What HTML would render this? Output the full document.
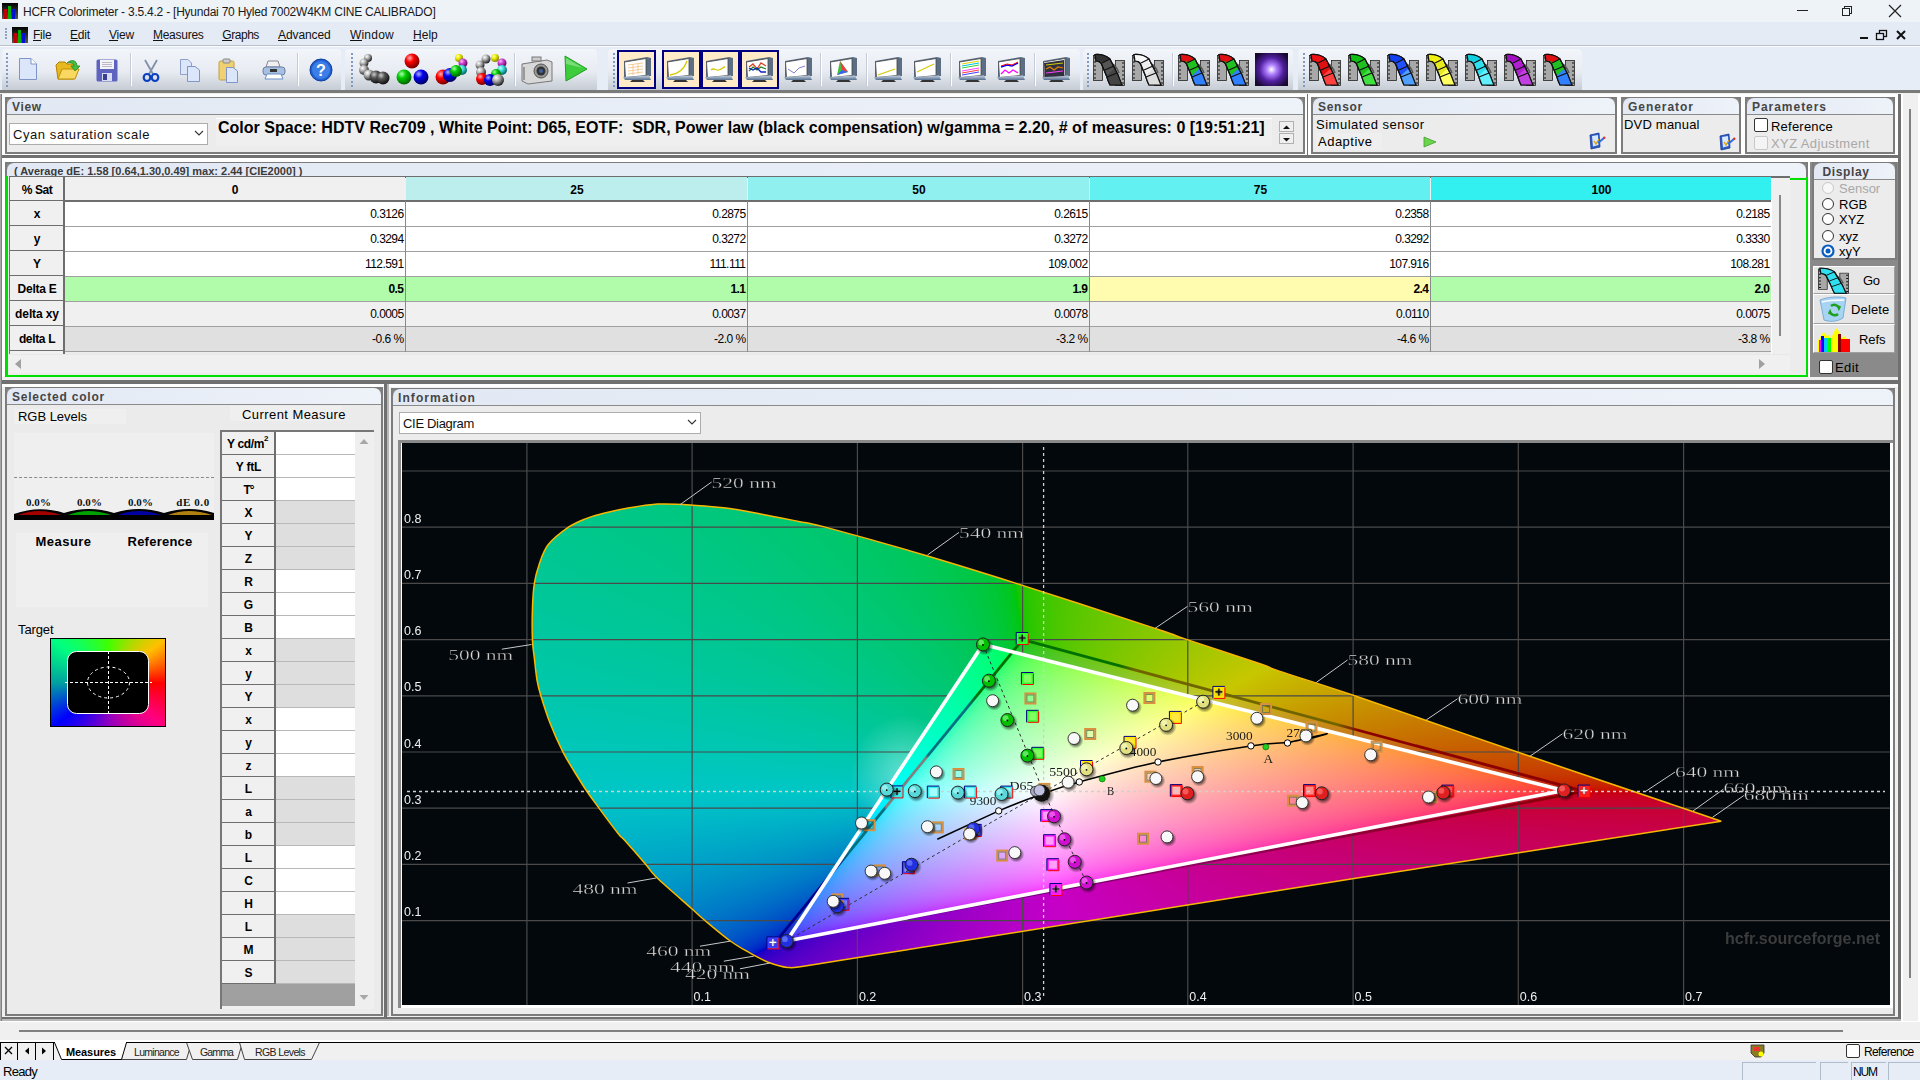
<!DOCTYPE html><html><head><meta charset="utf-8"><title>HCFR</title><style>*{margin:0;padding:0;box-sizing:border-box}
html,body{width:1920px;height:1080px;overflow:hidden;background:#f0f0f0;font-family:"Liberation Sans",sans-serif;font-size:12px;color:#000;position:relative}
div{position:absolute}
.t{white-space:pre;line-height:1}
svg{overflow:visible}
</style></head><body>
<svg width="0" height="0" style="position:absolute"><defs><radialGradient id="ballG" cx="0.35" cy="0.3" r="0.7"><stop offset="0" stop-color="#fff"/><stop offset="0.45" stop-color="#aaa"/><stop offset="1" stop-color="#222"/></radialGradient><radialGradient id="ballD" cx="0.35" cy="0.3" r="0.7"><stop offset="0" stop-color="#ccc"/><stop offset="0.4" stop-color="#555"/><stop offset="1" stop-color="#111"/></radialGradient><radialGradient id="ballR" cx="0.35" cy="0.3" r="0.7"><stop offset="0" stop-color="#ffb0b0"/><stop offset="0.4" stop-color="#f00"/><stop offset="1" stop-color="#700"/></radialGradient><radialGradient id="ballGr" cx="0.35" cy="0.3" r="0.7"><stop offset="0" stop-color="#b0ffb0"/><stop offset="0.4" stop-color="#0c0"/><stop offset="1" stop-color="#060"/></radialGradient><radialGradient id="ballB" cx="0.35" cy="0.3" r="0.7"><stop offset="0" stop-color="#b0b0ff"/><stop offset="0.4" stop-color="#00e"/><stop offset="1" stop-color="#006"/></radialGradient><radialGradient id="ballY" cx="0.35" cy="0.3" r="0.7"><stop offset="0" stop-color="#ffffc0"/><stop offset="0.4" stop-color="#ee0"/><stop offset="1" stop-color="#880"/></radialGradient><radialGradient id="ballM" cx="0.35" cy="0.3" r="0.7"><stop offset="0" stop-color="#ffc0ff"/><stop offset="0.4" stop-color="#c4c"/><stop offset="1" stop-color="#606"/></radialGradient><radialGradient id="ballC" cx="0.35" cy="0.3" r="0.7"><stop offset="0" stop-color="#c0ffff"/><stop offset="0.4" stop-color="#4dd"/><stop offset="1" stop-color="#066"/></radialGradient><linearGradient id="monB" x1="0" y1="0" x2="0" y2="1"><stop offset="0" stop-color="#c8d4e4"/><stop offset="1" stop-color="#56708e"/></linearGradient><linearGradient id="tbg" x1="0" y1="0" x2="0" y2="1"><stop offset="0" stop-color="#f1f4f9"/><stop offset="0.55" stop-color="#e6eaf0"/><stop offset="1" stop-color="#c9cfd7"/></linearGradient><radialGradient id="purp" cx="0.5" cy="0.5" r="0.6"><stop offset="0" stop-color="#fff"/><stop offset="0.25" stop-color="#b080ff"/><stop offset="0.6" stop-color="#5020a0"/><stop offset="1" stop-color="#180830"/></radialGradient></defs></svg>
<div style="left:0px;top:0px;width:1920px;height:22px;background:#eef3f8;"></div>
<svg style="position:absolute;left:2px;top:3px" width="16" height="16" viewBox="0 0 16 16"><defs><linearGradient id="aig" x1="0" y1="0" x2="0" y2="1"><stop offset="0" stop-color="#000"/><stop offset="1" stop-color="#555"/></linearGradient></defs><rect x="0" y="0" width="16" height="16" fill="url(#aig)"/><rect x="2" y="6" width="3" height="10" fill="#c00000"/><rect x="6" y="3" width="3" height="13" fill="#00b000"/><rect x="10" y="6" width="3" height="10" fill="#0010d0"/></svg>
<div class="t" style="left:23.00px;top:5.84px;font-size:12px;color:#1a1a1a;letter-spacing:-0.230px;">HCFR Colorimeter - 3.5.4.2 - [Hyundai 70 Hyled 7002W4KM CINE CALIBRADO]</div>
<div style="left:1797px;top:10px;width:11px;height:1px;background:#222;"></div>
<div style="left:1844px;top:6px;width:8px;height:8px;border:1px solid #222;"></div>
<div style="left:1842px;top:8px;width:8px;height:8px;background:#eef3f8;border:1px solid #222;"></div>
<svg style="position:absolute;left:1888px;top:4px" width="14" height="14"><path d="M1 1L13 13M13 1L1 13" stroke="#222" stroke-width="1.2"/></svg>
<div style="left:0px;top:22px;width:1920px;height:24px;background:#e4ebf5;"></div>
<div style="left:0px;top:45px;width:1920px;height:1px;background:#b9c0c8;"></div>
<div style="left:5px;top:28px;width:2px;height:2px;background:#8ea3c0;"></div>
<div style="left:5px;top:31px;width:2px;height:2px;background:#8ea3c0;"></div>
<div style="left:5px;top:34px;width:2px;height:2px;background:#8ea3c0;"></div>
<div style="left:5px;top:37px;width:2px;height:2px;background:#8ea3c0;"></div>
<svg style="position:absolute;left:12px;top:27px" width="16" height="16" viewBox="0 0 16 16"><defs><linearGradient id="aig" x1="0" y1="0" x2="0" y2="1"><stop offset="0" stop-color="#000"/><stop offset="1" stop-color="#555"/></linearGradient></defs><rect x="0" y="0" width="16" height="16" fill="url(#aig)"/><rect x="2" y="6" width="3" height="10" fill="#c00000"/><rect x="6" y="3" width="3" height="13" fill="#00b000"/><rect x="10" y="6" width="3" height="10" fill="#0010d0"/></svg>
<div class="t" style="left:33.00px;top:28.84px;font-size:12px;color:#111;letter-spacing:-0.209px;">File</div>
<div style="left:33px;top:40px;width:8px;height:1px;background:#111;"></div>
<div class="t" style="left:70.00px;top:28.84px;font-size:12px;color:#111;letter-spacing:-0.170px;">Edit</div>
<div style="left:70px;top:40px;width:9px;height:1px;background:#111;"></div>
<div class="t" style="left:109.00px;top:28.84px;font-size:12px;color:#111;letter-spacing:-0.198px;">View</div>
<div style="left:109px;top:40px;width:9px;height:1px;background:#111;"></div>
<div class="t" style="left:153.00px;top:28.84px;font-size:12px;color:#111;letter-spacing:-0.273px;">Measures</div>
<div style="left:153px;top:40px;width:10px;height:1px;background:#111;"></div>
<div class="t" style="left:222.30px;top:28.84px;font-size:12px;color:#111;letter-spacing:-0.459px;">Graphs</div>
<div style="left:222.3px;top:40px;width:10px;height:1px;background:#111;"></div>
<div class="t" style="left:278.00px;top:28.84px;font-size:12px;color:#111;letter-spacing:-0.084px;">Advanced</div>
<div style="left:278px;top:40px;width:9px;height:1px;background:#111;"></div>
<div class="t" style="left:349.90px;top:28.84px;font-size:12px;color:#111;letter-spacing:0.237px;">Window</div>
<div style="left:349.9px;top:40px;width:12px;height:1px;background:#111;"></div>
<div class="t" style="left:413.00px;top:28.84px;font-size:12px;color:#111;letter-spacing:0.030px;">Help</div>
<div style="left:413px;top:40px;width:9px;height:1px;background:#111;"></div>
<div style="left:1860px;top:37px;width:8px;height:2px;background:#111;"></div>
<svg style="position:absolute;left:1876px;top:30px" width="12" height="10"><rect x="3.5" y="0.5" width="7" height="6" fill="none" stroke="#111" stroke-width="1.3"/><rect x="0.5" y="3.5" width="7" height="6" fill="#e4ebf5" stroke="#111" stroke-width="1.3"/></svg>
<svg style="position:absolute;left:1896px;top:30px" width="10" height="10"><path d="M1 1L9 9M9 1L1 9" stroke="#111" stroke-width="2"/></svg>
<div style="left:0px;top:46px;width:1920px;height:44px;background:#e6edf6;"></div>
<div style="left:0px;top:46px;width:1920px;height:1px;background:#fafcff;"></div>
<div style="left:2px;top:49px;width:339px;height:41px;background:linear-gradient(180deg,#f2f5fa 0%,#e8ecf2 55%,#c6ccd5 100%);border-radius:4px 4px 0 0;"></div>
<div style="left:345px;top:49px;width:252px;height:41px;background:linear-gradient(180deg,#f2f5fa 0%,#e8ecf2 55%,#c6ccd5 100%);border-radius:4px 4px 0 0;"></div>
<div style="left:608px;top:49px;width:472px;height:41px;background:linear-gradient(180deg,#f2f5fa 0%,#e8ecf2 55%,#c6ccd5 100%);border-radius:4px 4px 0 0;"></div>
<div style="left:1083px;top:49px;width:210px;height:41px;background:linear-gradient(180deg,#f2f5fa 0%,#e8ecf2 55%,#c6ccd5 100%);border-radius:4px 4px 0 0;"></div>
<div style="left:1298px;top:49px;width:284px;height:41px;background:linear-gradient(180deg,#f2f5fa 0%,#e8ecf2 55%,#c6ccd5 100%);border-radius:4px 4px 0 0;"></div>
<div style="left:6px;top:53px;width:2px;height:2px;background:#7f9bc4;"></div>
<div style="left:6px;top:57px;width:2px;height:2px;background:#7f9bc4;"></div>
<div style="left:6px;top:61px;width:2px;height:2px;background:#7f9bc4;"></div>
<div style="left:6px;top:65px;width:2px;height:2px;background:#7f9bc4;"></div>
<div style="left:6px;top:69px;width:2px;height:2px;background:#7f9bc4;"></div>
<div style="left:6px;top:73px;width:2px;height:2px;background:#7f9bc4;"></div>
<div style="left:6px;top:77px;width:2px;height:2px;background:#7f9bc4;"></div>
<div style="left:6px;top:81px;width:2px;height:2px;background:#7f9bc4;"></div>
<div style="left:6px;top:85px;width:2px;height:2px;background:#7f9bc4;"></div>
<div style="left:351px;top:53px;width:2px;height:2px;background:#7f9bc4;"></div>
<div style="left:351px;top:57px;width:2px;height:2px;background:#7f9bc4;"></div>
<div style="left:351px;top:61px;width:2px;height:2px;background:#7f9bc4;"></div>
<div style="left:351px;top:65px;width:2px;height:2px;background:#7f9bc4;"></div>
<div style="left:351px;top:69px;width:2px;height:2px;background:#7f9bc4;"></div>
<div style="left:351px;top:73px;width:2px;height:2px;background:#7f9bc4;"></div>
<div style="left:351px;top:77px;width:2px;height:2px;background:#7f9bc4;"></div>
<div style="left:351px;top:81px;width:2px;height:2px;background:#7f9bc4;"></div>
<div style="left:351px;top:85px;width:2px;height:2px;background:#7f9bc4;"></div>
<div style="left:613px;top:53px;width:2px;height:2px;background:#7f9bc4;"></div>
<div style="left:613px;top:57px;width:2px;height:2px;background:#7f9bc4;"></div>
<div style="left:613px;top:61px;width:2px;height:2px;background:#7f9bc4;"></div>
<div style="left:613px;top:65px;width:2px;height:2px;background:#7f9bc4;"></div>
<div style="left:613px;top:69px;width:2px;height:2px;background:#7f9bc4;"></div>
<div style="left:613px;top:73px;width:2px;height:2px;background:#7f9bc4;"></div>
<div style="left:613px;top:77px;width:2px;height:2px;background:#7f9bc4;"></div>
<div style="left:613px;top:81px;width:2px;height:2px;background:#7f9bc4;"></div>
<div style="left:613px;top:85px;width:2px;height:2px;background:#7f9bc4;"></div>
<div style="left:1087px;top:53px;width:2px;height:2px;background:#7f9bc4;"></div>
<div style="left:1087px;top:57px;width:2px;height:2px;background:#7f9bc4;"></div>
<div style="left:1087px;top:61px;width:2px;height:2px;background:#7f9bc4;"></div>
<div style="left:1087px;top:65px;width:2px;height:2px;background:#7f9bc4;"></div>
<div style="left:1087px;top:69px;width:2px;height:2px;background:#7f9bc4;"></div>
<div style="left:1087px;top:73px;width:2px;height:2px;background:#7f9bc4;"></div>
<div style="left:1087px;top:77px;width:2px;height:2px;background:#7f9bc4;"></div>
<div style="left:1087px;top:81px;width:2px;height:2px;background:#7f9bc4;"></div>
<div style="left:1087px;top:85px;width:2px;height:2px;background:#7f9bc4;"></div>
<div style="left:1303px;top:53px;width:2px;height:2px;background:#7f9bc4;"></div>
<div style="left:1303px;top:57px;width:2px;height:2px;background:#7f9bc4;"></div>
<div style="left:1303px;top:61px;width:2px;height:2px;background:#7f9bc4;"></div>
<div style="left:1303px;top:65px;width:2px;height:2px;background:#7f9bc4;"></div>
<div style="left:1303px;top:69px;width:2px;height:2px;background:#7f9bc4;"></div>
<div style="left:1303px;top:73px;width:2px;height:2px;background:#7f9bc4;"></div>
<div style="left:1303px;top:77px;width:2px;height:2px;background:#7f9bc4;"></div>
<div style="left:1303px;top:81px;width:2px;height:2px;background:#7f9bc4;"></div>
<div style="left:1303px;top:85px;width:2px;height:2px;background:#7f9bc4;"></div>
<div style="left:130px;top:53px;width:1px;height:33px;background:#c5ccd6;"></div>
<div style="left:131px;top:53px;width:1px;height:33px;background:#fff;"></div>
<div style="left:297px;top:53px;width:1px;height:33px;background:#c5ccd6;"></div>
<div style="left:298px;top:53px;width:1px;height:33px;background:#fff;"></div>
<div style="left:514px;top:53px;width:1px;height:33px;background:#c5ccd6;"></div>
<div style="left:515px;top:53px;width:1px;height:33px;background:#fff;"></div>
<div style="left:820px;top:53px;width:1px;height:33px;background:#c5ccd6;"></div>
<div style="left:821px;top:53px;width:1px;height:33px;background:#fff;"></div>
<div style="left:866px;top:53px;width:1px;height:33px;background:#c5ccd6;"></div>
<div style="left:867px;top:53px;width:1px;height:33px;background:#fff;"></div>
<div style="left:950px;top:53px;width:1px;height:33px;background:#c5ccd6;"></div>
<div style="left:951px;top:53px;width:1px;height:33px;background:#fff;"></div>
<div style="left:1034px;top:53px;width:1px;height:33px;background:#c5ccd6;"></div>
<div style="left:1035px;top:53px;width:1px;height:33px;background:#fff;"></div>
<div style="left:1172px;top:53px;width:1px;height:33px;background:#c5ccd6;"></div>
<div style="left:1173px;top:53px;width:1px;height:33px;background:#fff;"></div>
<svg style="position:absolute;left:18px;top:57px" width="20" height="24" viewBox="0 0 20 24"><path d="M1.5 1.5H13L18.5 7V22.5H1.5Z" fill="#dbe6fa" stroke="#7f94c8" stroke-width="1"/><path d="M13 1.5V7H18.5" fill="#fff" stroke="#7f94c8"/></svg>
<svg style="position:absolute;left:55px;top:59px" width="26" height="22" viewBox="0 0 26 22"><path d="M1 6L4 3H10L12 5H19V20H3Z" fill="#e8b820" stroke="#b08000"/><path d="M3 20L7 10H24L20 20Z" fill="#f8d860" stroke="#c09000"/><path d="M12 4C16 0 22 1 22 7L25 7L20 12L16 7L19 7C19 4 15 3 12 4Z" fill="#40c040" stroke="#208020" stroke-width="0.7"/></svg>
<svg style="position:absolute;left:96px;top:59px" width="22" height="23" viewBox="0 0 22 23"><rect x="0.5" y="0.5" width="21" height="22" rx="1.5" fill="#5e63c0"/><rect x="4" y="1" width="14" height="9" fill="#f4f4f8"/><path d="M6 3.5H16M6 5.5H16M6 7.5H16" stroke="#aab" stroke-width="0.8"/><rect x="6" y="14" width="10" height="8" fill="#d8dcf0"/><rect x="7" y="15" width="4" height="6" fill="#3a3f90"/></svg>
<svg style="position:absolute;left:142px;top:59px" width="18" height="23" viewBox="0 0 18 23"><path d="M3 1L11 15M15 1L7 15" stroke="#8090a8" stroke-width="1.8"/><ellipse cx="5" cy="18.5" rx="3.3" ry="3.5" fill="none" stroke="#0a40c0" stroke-width="2.2"/><ellipse cx="13" cy="18.5" rx="3.3" ry="3.5" fill="none" stroke="#0a40c0" stroke-width="2.2"/></svg>
<svg style="position:absolute;left:179px;top:58px" width="22" height="24" viewBox="0 0 22 24"><path d="M1.5 1.5H9L12.5 5V16.5H1.5Z" fill="#dbe6fa" stroke="#8fa0c8"/><path d="M8.5 8.5H16L20.5 12V23.5H8.5Z" fill="#dbe6fa" stroke="#7f94c8"/></svg>
<svg style="position:absolute;left:218px;top:58px" width="21" height="25" viewBox="0 0 21 25"><rect x="1" y="3" width="15" height="19" rx="1.5" fill="#f0d070" stroke="#c0a040"/><rect x="5" y="1" width="7" height="4" rx="1" fill="#ccc" stroke="#888"/><path d="M8.5 9.5H15L19.5 13V24.5H8.5Z" fill="#dbe6fa" stroke="#7f94c8"/></svg>
<svg style="position:absolute;left:262px;top:59px" width="24" height="21" viewBox="0 0 24 21"><path d="M6 2H16L18 8H4Z" fill="#f0f0f0" stroke="#889"/><rect x="1" y="8" width="22" height="8" rx="3" fill="#a8c0e0" stroke="#6880a8"/><rect x="8" y="10" width="7" height="3" fill="#333"/><path d="M5 15H19L21 20H3Z" fill="#fff" stroke="#6890c8"/></svg>
<svg style="position:absolute;left:309px;top:58px" width="24" height="24" viewBox="0 0 24 24"><circle cx="12" cy="12" r="11" fill="#2060d0" stroke="#1040a0"/><circle cx="12" cy="12" r="9" fill="#3c7ee8"/><text x="12" y="17.5" text-anchor="middle" font-family="Liberation Sans" font-weight="bold" font-size="16" fill="#fff">?</text></svg>
<svg style="position:absolute;left:357px;top:53px" width="34" height="33" viewBox="0 0 34 33"><circle cx="11" cy="5" r="4" fill="url(#ballG)"/><circle cx="7" cy="10" r="4.5" fill="url(#ballG)"/><circle cx="7" cy="17" r="5" fill="url(#ballG)"/><circle cx="12" cy="22" r="5.5" fill="url(#ballG)"/><circle cx="19" cy="24" r="6.5" fill="url(#ballD)"/><circle cx="26" cy="25" r="6.5" fill="url(#ballD)"/></svg>
<svg style="position:absolute;left:396px;top:53px" width="34" height="33" viewBox="0 0 34 33"><circle cx="16" cy="8" r="7.5" fill="url(#ballR)"/><circle cx="8" cy="24" r="7.5" fill="url(#ballGr)"/><circle cx="25" cy="24" r="7.5" fill="url(#ballB)"/></svg>
<svg style="position:absolute;left:435px;top:53px" width="34" height="33" viewBox="0 0 34 33"><circle cx="24" cy="5" r="4" fill="url(#ballY)"/><circle cx="28" cy="10" r="4.5" fill="url(#ballM)"/><circle cx="27" cy="17" r="5" fill="url(#ballC)"/><circle cx="8" cy="24" r="7.5" fill="url(#ballR)"/><circle cx="15" cy="22" r="7" fill="url(#ballB)"/><circle cx="21" cy="18" r="6" fill="url(#ballGr)"/></svg>
<svg style="position:absolute;left:474px;top:53px" width="34" height="33" viewBox="0 0 34 33"><circle cx="12" cy="6" r="4.5" fill="url(#ballG)"/><circle cx="21" cy="5" r="4" fill="url(#ballY)"/><circle cx="28" cy="10" r="4.5" fill="url(#ballM)"/><circle cx="28" cy="17" r="5" fill="url(#ballC)"/><circle cx="22" cy="21" r="5" fill="url(#ballGr)"/><circle cx="6" cy="12" r="4.5" fill="url(#ballG)"/><circle cx="7" cy="19" r="5" fill="url(#ballG)"/><circle cx="8" cy="26" r="6" fill="url(#ballR)"/><circle cx="16" cy="27" r="6" fill="url(#ballB)"/><circle cx="24" cy="27" r="6" fill="url(#ballG)"/></svg>
<svg style="position:absolute;left:520px;top:55px" width="34" height="30" viewBox="0 0 34 30"><path d="M2 9L27 5L32 7L32 26L8 29L2 26Z" fill="#d8d8d8" stroke="#777"/><rect x="12" y="2" width="9" height="4" fill="#ccc" stroke="#777"/><circle cx="21" cy="16" r="7" fill="#999" stroke="#555"/><circle cx="21" cy="16" r="4.5" fill="#333"/><circle cx="21" cy="16" r="2" fill="#4060a0"/><path d="M4 12V25" stroke="#999" stroke-width="2"/></svg>
<svg style="position:absolute;left:563px;top:54px" width="26" height="28" viewBox="0 0 26 28"><path d="M2 2L24 15L3 27Z" fill="#3ccc3c" stroke="#22a022"/><path d="M3 4L20 14L3 10Z" fill="#a0e8a0" opacity="0.6"/></svg>
<div style="left:617px;top:50px;width:39px;height:39px;background:#ffebc8;border:2px solid #000080;"></div>
<div style="left:662px;top:50px;width:39px;height:39px;background:#ffebc8;border:2px solid #000080;"></div>
<div style="left:701px;top:50px;width:39px;height:39px;background:#ffebc8;border:2px solid #000080;"></div>
<div style="left:740px;top:50px;width:39px;height:39px;background:#ffebc8;border:2px solid #000080;"></div>
<svg style="position:absolute;left:621px;top:55px" width="32" height="28" viewBox="0 0 32 28"><path d="M3 6L26 2L30 3V21L5 24L3 22Z" fill="#5c6e84"/><path d="M3.5 7L25 3.5V20.5L4.5 22.5Z" fill="#fff" stroke="#444" stroke-width="0.8"/><path d="M2 22L28 20.5L30 25H4Z" fill="url(#monB)"/><path d="M9 27H24L22 25H11Z" fill="#333"/><path d="M7 10L22 8M7 13L22 11M7 16L22 14M7 19L22 17M12 9V20M17 8V19" stroke="#f0c080" stroke-width="0.8"/></svg>
<svg style="position:absolute;left:664px;top:55px" width="32" height="28" viewBox="0 0 32 28"><path d="M3 6L26 2L30 3V21L5 24L3 22Z" fill="#5c6e84"/><path d="M3.5 7L25 3.5V20.5L4.5 22.5Z" fill="#fff" stroke="#444" stroke-width="0.8"/><path d="M2 22L28 20.5L30 25H4Z" fill="url(#monB)"/><path d="M9 27H24L22 25H11Z" fill="#333"/><path d="M6 20C14 19 20 15 23 6" stroke="#d8c800" stroke-width="1.3" fill="none"/></svg>
<svg style="position:absolute;left:703px;top:55px" width="32" height="28" viewBox="0 0 32 28"><path d="M3 6L26 2L30 3V21L5 24L3 22Z" fill="#5c6e84"/><path d="M3.5 7L25 3.5V20.5L4.5 22.5Z" fill="#fff" stroke="#444" stroke-width="0.8"/><path d="M2 22L28 20.5L30 25H4Z" fill="url(#monB)"/><path d="M9 27H24L22 25H11Z" fill="#333"/><path d="M8 15C11 12 13 16 16 15S20 12 22 12" stroke="#d8c800" stroke-width="1.3" fill="none"/></svg>
<svg style="position:absolute;left:743px;top:55px" width="32" height="28" viewBox="0 0 32 28"><path d="M3 6L26 2L30 3V21L5 24L3 22Z" fill="#5c6e84"/><path d="M3.5 7L25 3.5V20.5L4.5 22.5Z" fill="#fff" stroke="#444" stroke-width="0.8"/><path d="M2 22L28 20.5L30 25H4Z" fill="url(#monB)"/><path d="M9 27H24L22 25H11Z" fill="#333"/><path d="M6 12L10 9L14 14L18 8L23 11" stroke="#e04020" stroke-width="1.3" fill="none"/><path d="M6 16L10 12L14 15L18 12L23 14" stroke="#208020" stroke-width="1.3" fill="none"/><path d="M6 13L10 15L14 13L18 17L23 17" stroke="#1020c0" stroke-width="1.3" fill="none"/></svg>
<svg style="position:absolute;left:782px;top:55px" width="32" height="28" viewBox="0 0 32 28"><path d="M3 6L26 2L30 3V21L5 24L3 22Z" fill="#5c6e84"/><path d="M3.5 7L25 3.5V20.5L4.5 22.5Z" fill="#fff" stroke="#444" stroke-width="0.8"/><path d="M2 22L28 20.5L30 25H4Z" fill="url(#monB)"/><path d="M9 27H24L22 25H11Z" fill="#333"/><path d="M6 14L12 18L17 13L23 11" stroke="#8080d0" stroke-width="1" fill="none"/></svg>
<svg style="position:absolute;left:827px;top:55px" width="32" height="28" viewBox="0 0 32 28"><path d="M3 6L26 2L30 3V21L5 24L3 22Z" fill="#5c6e84"/><path d="M3.5 7L25 3.5V20.5L4.5 22.5Z" fill="#fff" stroke="#444" stroke-width="0.8"/><path d="M2 22L28 20.5L30 25H4Z" fill="url(#monB)"/><path d="M9 27H24L22 25H11Z" fill="#333"/><path d="M10 20L13 6L21 17Z" fill="#40c040"/><path d="M13 6L21 17L15 15Z" fill="#f04040"/><path d="M10 20L15 15L21 17Z" fill="#4060f0"/></svg>
<svg style="position:absolute;left:872px;top:55px" width="32" height="28" viewBox="0 0 32 28"><path d="M3 6L26 2L30 3V21L5 24L3 22Z" fill="#5c6e84"/><path d="M3.5 7L25 3.5V20.5L4.5 22.5Z" fill="#fff" stroke="#444" stroke-width="0.8"/><path d="M2 22L28 20.5L30 25H4Z" fill="url(#monB)"/><path d="M9 27H24L22 25H11Z" fill="#333"/><path d="M6 20L23 14" stroke="#d8c800" stroke-width="1.3"/></svg>
<svg style="position:absolute;left:911px;top:55px" width="32" height="28" viewBox="0 0 32 28"><path d="M3 6L26 2L30 3V21L5 24L3 22Z" fill="#5c6e84"/><path d="M3.5 7L25 3.5V20.5L4.5 22.5Z" fill="#fff" stroke="#444" stroke-width="0.8"/><path d="M2 22L28 20.5L30 25H4Z" fill="url(#monB)"/><path d="M9 27H24L22 25H11Z" fill="#333"/><path d="M6 17L23 9" stroke="#d8c800" stroke-width="1.3"/></svg>
<svg style="position:absolute;left:956px;top:55px" width="32" height="28" viewBox="0 0 32 28"><path d="M3 6L26 2L30 3V21L5 24L3 22Z" fill="#5c6e84"/><path d="M3.5 7L25 3.5V20.5L4.5 22.5Z" fill="#fff" stroke="#444" stroke-width="0.8"/><path d="M2 22L28 20.5L30 25H4Z" fill="url(#monB)"/><path d="M9 27H24L22 25H11Z" fill="#333"/><path d="M6 9L23 6" stroke="#e0d000" stroke-width="1"/><path d="M6 11L23 8" stroke="#00c8e0" stroke-width="1"/><path d="M6 13L23 10" stroke="#40d040" stroke-width="1"/><path d="M6 16L23 13" stroke="#ff40ff" stroke-width="1"/><path d="M6 18L23 15" stroke="#ff4040" stroke-width="1"/><path d="M6 20L23 17" stroke="#4040ff" stroke-width="1"/></svg>
<svg style="position:absolute;left:995px;top:55px" width="32" height="28" viewBox="0 0 32 28"><path d="M3 6L26 2L30 3V21L5 24L3 22Z" fill="#5c6e84"/><path d="M3.5 7L25 3.5V20.5L4.5 22.5Z" fill="#fff" stroke="#444" stroke-width="0.8"/><path d="M2 22L28 20.5L30 25H4Z" fill="url(#monB)"/><path d="M9 27H24L22 25H11Z" fill="#333"/><path d="M6 12L12 10L17 11L23 8" stroke="#00f" stroke-width="1.5" fill="none"/><path d="M6 11L12 9L17 10L23 7" stroke="#f00" stroke-width="1" fill="none"/><path d="M6 19L10 15L14 18L18 15L23 18" stroke="#ff00ff" stroke-width="1.3" fill="none"/></svg>
<svg style="position:absolute;left:1040px;top:55px" width="32" height="28" viewBox="0 0 32 28"><path d="M3 6L26 2L30 3V21L5 24L3 22Z" fill="#5c6e84"/><path d="M3.5 7L25 3.5V20.5L4.5 22.5Z" fill="#fff" stroke="#444" stroke-width="0.8"/><path d="M2 22L28 20.5L30 25H4Z" fill="url(#monB)"/><path d="M9 27H24L22 25H11Z" fill="#333"/><path d="M4 8L24 5V21L5 22Z" fill="#303040"/><path d="M6 10L23 8" stroke="#d0d000" stroke-width="1"/><path d="M6 14L10 12L14 15L18 12L23 13" stroke="#e08000" stroke-width="1.2" fill="none"/><path d="M6 18L23 16" stroke="#ff40ff" stroke-width="1"/></svg>
<svg style="position:absolute;left:1093px;top:53px" width="33" height="33" viewBox="0 0 33 33"><rect x="0.5" y="2.5" width="9" height="25" fill="#a8a8a8" stroke="#222" stroke-width="0.8"/><path d="M1 5H3M1 9H3M1 13H3M1 17H3M1 21H3M1 25H3" stroke="#111" stroke-width="1.2"/><rect x="22.5" y="7.5" width="9" height="25" fill="#a8a8a8" stroke="#222" stroke-width="0.8"/><path d="M29 10H31M29 14H31M29 18H31M29 22H31M29 26H31M29 30H31" stroke="#111" stroke-width="1.2"/><path d="M5 8C10 10 12 12 14 17M18 10C22 12 24 14 26 20" stroke="#555" stroke-width="1.5" fill="none"/><path d="M2 1.5C9 1 13 2.5 17 6L25 22C26.5 26 27.5 29 29 32H17C15.5 29 14.5 26 13.5 23L8.5 11C7.5 9 6 8 3 8Z" fill="#555" stroke="#111" stroke-width="1.2"/><path d="M2 1.5C9 1 13 2.5 17 6L10 9C8.5 8.5 6 8 3 8Z" fill="#333"/><path d="M21 16L25 22C26.5 26 27.5 29 29 32H17C15.5 29 14.5 26 13.5 23Z" fill="#444"/><path d="M9 10L17 6M12 17L21 13M14 24L24 20" stroke="#111" stroke-width="1.2"/><path d="M2 1.5C9 1 13 2.5 17 6L25 22C26.5 26 27.5 29 29 32H17C15.5 29 14.5 26 13.5 23L8.5 11C7.5 9 6 8 3 8Z" fill="none" stroke="#111" stroke-width="1.2"/></svg>
<svg style="position:absolute;left:1132px;top:53px" width="33" height="33" viewBox="0 0 33 33"><rect x="0.5" y="2.5" width="9" height="25" fill="#a8a8a8" stroke="#222" stroke-width="0.8"/><path d="M1 5H3M1 9H3M1 13H3M1 17H3M1 21H3M1 25H3" stroke="#111" stroke-width="1.2"/><rect x="22.5" y="7.5" width="9" height="25" fill="#a8a8a8" stroke="#222" stroke-width="0.8"/><path d="M29 10H31M29 14H31M29 18H31M29 22H31M29 26H31M29 30H31" stroke="#111" stroke-width="1.2"/><path d="M5 8C10 10 12 12 14 17M18 10C22 12 24 14 26 20" stroke="#555" stroke-width="1.5" fill="none"/><path d="M2 1.5C9 1 13 2.5 17 6L25 22C26.5 26 27.5 29 29 32H17C15.5 29 14.5 26 13.5 23L8.5 11C7.5 9 6 8 3 8Z" fill="#eee" stroke="#111" stroke-width="1.2"/><path d="M2 1.5C9 1 13 2.5 17 6L10 9C8.5 8.5 6 8 3 8Z" fill="#f8f8f8"/><path d="M21 16L25 22C26.5 26 27.5 29 29 32H17C15.5 29 14.5 26 13.5 23Z" fill="#ddd"/><path d="M9 10L17 6M12 17L21 13M14 24L24 20" stroke="#111" stroke-width="1.2"/><path d="M2 1.5C9 1 13 2.5 17 6L25 22C26.5 26 27.5 29 29 32H17C15.5 29 14.5 26 13.5 23L8.5 11C7.5 9 6 8 3 8Z" fill="none" stroke="#111" stroke-width="1.2"/></svg>
<svg style="position:absolute;left:1178px;top:53px" width="33" height="33" viewBox="0 0 33 33"><rect x="0.5" y="2.5" width="9" height="25" fill="#a8a8a8" stroke="#222" stroke-width="0.8"/><path d="M1 5H3M1 9H3M1 13H3M1 17H3M1 21H3M1 25H3" stroke="#111" stroke-width="1.2"/><rect x="22.5" y="7.5" width="9" height="25" fill="#a8a8a8" stroke="#222" stroke-width="0.8"/><path d="M29 10H31M29 14H31M29 18H31M29 22H31M29 26H31M29 30H31" stroke="#111" stroke-width="1.2"/><path d="M5 8C10 10 12 12 14 17M18 10C22 12 24 14 26 20" stroke="#555" stroke-width="1.5" fill="none"/><path d="M2 1.5C9 1 13 2.5 17 6L25 22C26.5 26 27.5 29 29 32H17C15.5 29 14.5 26 13.5 23L8.5 11C7.5 9 6 8 3 8Z" fill="#20c020" stroke="#111" stroke-width="1.2"/><path d="M2 1.5C9 1 13 2.5 17 6L10 9C8.5 8.5 6 8 3 8Z" fill="#e01010"/><path d="M21 16L25 22C26.5 26 27.5 29 29 32H17C15.5 29 14.5 26 13.5 23Z" fill="#3080ff"/><path d="M9 10L17 6M12 17L21 13M14 24L24 20" stroke="#111" stroke-width="1.2"/><path d="M2 1.5C9 1 13 2.5 17 6L25 22C26.5 26 27.5 29 29 32H17C15.5 29 14.5 26 13.5 23L8.5 11C7.5 9 6 8 3 8Z" fill="none" stroke="#111" stroke-width="1.2"/></svg>
<svg style="position:absolute;left:1217px;top:53px" width="33" height="33" viewBox="0 0 33 33"><rect x="0.5" y="2.5" width="9" height="25" fill="#a8a8a8" stroke="#222" stroke-width="0.8"/><path d="M1 5H3M1 9H3M1 13H3M1 17H3M1 21H3M1 25H3" stroke="#111" stroke-width="1.2"/><rect x="22.5" y="7.5" width="9" height="25" fill="#a8a8a8" stroke="#222" stroke-width="0.8"/><path d="M29 10H31M29 14H31M29 18H31M29 22H31M29 26H31M29 30H31" stroke="#111" stroke-width="1.2"/><path d="M5 8C10 10 12 12 14 17M18 10C22 12 24 14 26 20" stroke="#555" stroke-width="1.5" fill="none"/><path d="M2 1.5C9 1 13 2.5 17 6L25 22C26.5 26 27.5 29 29 32H17C15.5 29 14.5 26 13.5 23L8.5 11C7.5 9 6 8 3 8Z" fill="#20c020" stroke="#111" stroke-width="1.2"/><path d="M2 1.5C9 1 13 2.5 17 6L10 9C8.5 8.5 6 8 3 8Z" fill="#e01010"/><path d="M21 16L25 22C26.5 26 27.5 29 29 32H17C15.5 29 14.5 26 13.5 23Z" fill="#3080ff"/><path d="M9 10L17 6M12 17L21 13M14 24L24 20" stroke="#111" stroke-width="1.2"/><path d="M2 1.5C9 1 13 2.5 17 6L25 22C26.5 26 27.5 29 29 32H17C15.5 29 14.5 26 13.5 23L8.5 11C7.5 9 6 8 3 8Z" fill="none" stroke="#111" stroke-width="1.2"/></svg>
<svg style="position:absolute;left:1255px;top:53px" width="33" height="33" viewBox="0 0 33 33"><rect x="0" y="0" width="33" height="33" fill="url(#purp)"/></svg>
<svg style="position:absolute;left:1309px;top:53px" width="33" height="33" viewBox="0 0 33 33"><rect x="0.5" y="2.5" width="9" height="25" fill="#a8a8a8" stroke="#222" stroke-width="0.8"/><path d="M1 5H3M1 9H3M1 13H3M1 17H3M1 21H3M1 25H3" stroke="#111" stroke-width="1.2"/><rect x="22.5" y="7.5" width="9" height="25" fill="#a8a8a8" stroke="#222" stroke-width="0.8"/><path d="M29 10H31M29 14H31M29 18H31M29 22H31M29 26H31M29 30H31" stroke="#111" stroke-width="1.2"/><path d="M5 8C10 10 12 12 14 17M18 10C22 12 24 14 26 20" stroke="#555" stroke-width="1.5" fill="none"/><path d="M2 1.5C9 1 13 2.5 17 6L25 22C26.5 26 27.5 29 29 32H17C15.5 29 14.5 26 13.5 23L8.5 11C7.5 9 6 8 3 8Z" fill="#e01010" stroke="#111" stroke-width="1.2"/><path d="M2 1.5C9 1 13 2.5 17 6L10 9C8.5 8.5 6 8 3 8Z" fill="#f01010"/><path d="M21 16L25 22C26.5 26 27.5 29 29 32H17C15.5 29 14.5 26 13.5 23Z" fill="#ff4040"/><path d="M9 10L17 6M12 17L21 13M14 24L24 20" stroke="#111" stroke-width="1.2"/><path d="M2 1.5C9 1 13 2.5 17 6L25 22C26.5 26 27.5 29 29 32H17C15.5 29 14.5 26 13.5 23L8.5 11C7.5 9 6 8 3 8Z" fill="none" stroke="#111" stroke-width="1.2"/></svg>
<svg style="position:absolute;left:1348px;top:53px" width="33" height="33" viewBox="0 0 33 33"><rect x="0.5" y="2.5" width="9" height="25" fill="#a8a8a8" stroke="#222" stroke-width="0.8"/><path d="M1 5H3M1 9H3M1 13H3M1 17H3M1 21H3M1 25H3" stroke="#111" stroke-width="1.2"/><rect x="22.5" y="7.5" width="9" height="25" fill="#a8a8a8" stroke="#222" stroke-width="0.8"/><path d="M29 10H31M29 14H31M29 18H31M29 22H31M29 26H31M29 30H31" stroke="#111" stroke-width="1.2"/><path d="M5 8C10 10 12 12 14 17M18 10C22 12 24 14 26 20" stroke="#555" stroke-width="1.5" fill="none"/><path d="M2 1.5C9 1 13 2.5 17 6L25 22C26.5 26 27.5 29 29 32H17C15.5 29 14.5 26 13.5 23L8.5 11C7.5 9 6 8 3 8Z" fill="#20c020" stroke="#111" stroke-width="1.2"/><path d="M2 1.5C9 1 13 2.5 17 6L10 9C8.5 8.5 6 8 3 8Z" fill="#10c010"/><path d="M21 16L25 22C26.5 26 27.5 29 29 32H17C15.5 29 14.5 26 13.5 23Z" fill="#40e040"/><path d="M9 10L17 6M12 17L21 13M14 24L24 20" stroke="#111" stroke-width="1.2"/><path d="M2 1.5C9 1 13 2.5 17 6L25 22C26.5 26 27.5 29 29 32H17C15.5 29 14.5 26 13.5 23L8.5 11C7.5 9 6 8 3 8Z" fill="none" stroke="#111" stroke-width="1.2"/></svg>
<svg style="position:absolute;left:1387px;top:53px" width="33" height="33" viewBox="0 0 33 33"><rect x="0.5" y="2.5" width="9" height="25" fill="#a8a8a8" stroke="#222" stroke-width="0.8"/><path d="M1 5H3M1 9H3M1 13H3M1 17H3M1 21H3M1 25H3" stroke="#111" stroke-width="1.2"/><rect x="22.5" y="7.5" width="9" height="25" fill="#a8a8a8" stroke="#222" stroke-width="0.8"/><path d="M29 10H31M29 14H31M29 18H31M29 22H31M29 26H31M29 30H31" stroke="#111" stroke-width="1.2"/><path d="M5 8C10 10 12 12 14 17M18 10C22 12 24 14 26 20" stroke="#555" stroke-width="1.5" fill="none"/><path d="M2 1.5C9 1 13 2.5 17 6L25 22C26.5 26 27.5 29 29 32H17C15.5 29 14.5 26 13.5 23L8.5 11C7.5 9 6 8 3 8Z" fill="#2050ff" stroke="#111" stroke-width="1.2"/><path d="M2 1.5C9 1 13 2.5 17 6L10 9C8.5 8.5 6 8 3 8Z" fill="#1040f0"/><path d="M21 16L25 22C26.5 26 27.5 29 29 32H17C15.5 29 14.5 26 13.5 23Z" fill="#50a0ff"/><path d="M9 10L17 6M12 17L21 13M14 24L24 20" stroke="#111" stroke-width="1.2"/><path d="M2 1.5C9 1 13 2.5 17 6L25 22C26.5 26 27.5 29 29 32H17C15.5 29 14.5 26 13.5 23L8.5 11C7.5 9 6 8 3 8Z" fill="none" stroke="#111" stroke-width="1.2"/></svg>
<svg style="position:absolute;left:1426px;top:53px" width="33" height="33" viewBox="0 0 33 33"><rect x="0.5" y="2.5" width="9" height="25" fill="#a8a8a8" stroke="#222" stroke-width="0.8"/><path d="M1 5H3M1 9H3M1 13H3M1 17H3M1 21H3M1 25H3" stroke="#111" stroke-width="1.2"/><rect x="22.5" y="7.5" width="9" height="25" fill="#a8a8a8" stroke="#222" stroke-width="0.8"/><path d="M29 10H31M29 14H31M29 18H31M29 22H31M29 26H31M29 30H31" stroke="#111" stroke-width="1.2"/><path d="M5 8C10 10 12 12 14 17M18 10C22 12 24 14 26 20" stroke="#555" stroke-width="1.5" fill="none"/><path d="M2 1.5C9 1 13 2.5 17 6L25 22C26.5 26 27.5 29 29 32H17C15.5 29 14.5 26 13.5 23L8.5 11C7.5 9 6 8 3 8Z" fill="#e8e820" stroke="#111" stroke-width="1.2"/><path d="M2 1.5C9 1 13 2.5 17 6L10 9C8.5 8.5 6 8 3 8Z" fill="#f0f010"/><path d="M21 16L25 22C26.5 26 27.5 29 29 32H17C15.5 29 14.5 26 13.5 23Z" fill="#ffff60"/><path d="M9 10L17 6M12 17L21 13M14 24L24 20" stroke="#111" stroke-width="1.2"/><path d="M2 1.5C9 1 13 2.5 17 6L25 22C26.5 26 27.5 29 29 32H17C15.5 29 14.5 26 13.5 23L8.5 11C7.5 9 6 8 3 8Z" fill="none" stroke="#111" stroke-width="1.2"/></svg>
<svg style="position:absolute;left:1465px;top:53px" width="33" height="33" viewBox="0 0 33 33"><rect x="0.5" y="2.5" width="9" height="25" fill="#a8a8a8" stroke="#222" stroke-width="0.8"/><path d="M1 5H3M1 9H3M1 13H3M1 17H3M1 21H3M1 25H3" stroke="#111" stroke-width="1.2"/><rect x="22.5" y="7.5" width="9" height="25" fill="#a8a8a8" stroke="#222" stroke-width="0.8"/><path d="M29 10H31M29 14H31M29 18H31M29 22H31M29 26H31M29 30H31" stroke="#111" stroke-width="1.2"/><path d="M5 8C10 10 12 12 14 17M18 10C22 12 24 14 26 20" stroke="#555" stroke-width="1.5" fill="none"/><path d="M2 1.5C9 1 13 2.5 17 6L25 22C26.5 26 27.5 29 29 32H17C15.5 29 14.5 26 13.5 23L8.5 11C7.5 9 6 8 3 8Z" fill="#30e0f0" stroke="#111" stroke-width="1.2"/><path d="M2 1.5C9 1 13 2.5 17 6L10 9C8.5 8.5 6 8 3 8Z" fill="#10d0e0"/><path d="M21 16L25 22C26.5 26 27.5 29 29 32H17C15.5 29 14.5 26 13.5 23Z" fill="#60f0ff"/><path d="M9 10L17 6M12 17L21 13M14 24L24 20" stroke="#111" stroke-width="1.2"/><path d="M2 1.5C9 1 13 2.5 17 6L25 22C26.5 26 27.5 29 29 32H17C15.5 29 14.5 26 13.5 23L8.5 11C7.5 9 6 8 3 8Z" fill="none" stroke="#111" stroke-width="1.2"/></svg>
<svg style="position:absolute;left:1504px;top:53px" width="33" height="33" viewBox="0 0 33 33"><rect x="0.5" y="2.5" width="9" height="25" fill="#a8a8a8" stroke="#222" stroke-width="0.8"/><path d="M1 5H3M1 9H3M1 13H3M1 17H3M1 21H3M1 25H3" stroke="#111" stroke-width="1.2"/><rect x="22.5" y="7.5" width="9" height="25" fill="#a8a8a8" stroke="#222" stroke-width="0.8"/><path d="M29 10H31M29 14H31M29 18H31M29 22H31M29 26H31M29 30H31" stroke="#111" stroke-width="1.2"/><path d="M5 8C10 10 12 12 14 17M18 10C22 12 24 14 26 20" stroke="#555" stroke-width="1.5" fill="none"/><path d="M2 1.5C9 1 13 2.5 17 6L25 22C26.5 26 27.5 29 29 32H17C15.5 29 14.5 26 13.5 23L8.5 11C7.5 9 6 8 3 8Z" fill="#b020d0" stroke="#111" stroke-width="1.2"/><path d="M2 1.5C9 1 13 2.5 17 6L10 9C8.5 8.5 6 8 3 8Z" fill="#a010c0"/><path d="M21 16L25 22C26.5 26 27.5 29 29 32H17C15.5 29 14.5 26 13.5 23Z" fill="#c040e0"/><path d="M9 10L17 6M12 17L21 13M14 24L24 20" stroke="#111" stroke-width="1.2"/><path d="M2 1.5C9 1 13 2.5 17 6L25 22C26.5 26 27.5 29 29 32H17C15.5 29 14.5 26 13.5 23L8.5 11C7.5 9 6 8 3 8Z" fill="none" stroke="#111" stroke-width="1.2"/></svg>
<svg style="position:absolute;left:1543px;top:53px" width="33" height="33" viewBox="0 0 33 33"><rect x="0.5" y="2.5" width="9" height="25" fill="#a8a8a8" stroke="#222" stroke-width="0.8"/><path d="M1 5H3M1 9H3M1 13H3M1 17H3M1 21H3M1 25H3" stroke="#111" stroke-width="1.2"/><rect x="22.5" y="7.5" width="9" height="25" fill="#a8a8a8" stroke="#222" stroke-width="0.8"/><path d="M29 10H31M29 14H31M29 18H31M29 22H31M29 26H31M29 30H31" stroke="#111" stroke-width="1.2"/><path d="M5 8C10 10 12 12 14 17M18 10C22 12 24 14 26 20" stroke="#555" stroke-width="1.5" fill="none"/><path d="M2 1.5C9 1 13 2.5 17 6L25 22C26.5 26 27.5 29 29 32H17C15.5 29 14.5 26 13.5 23L8.5 11C7.5 9 6 8 3 8Z" fill="#20c020" stroke="#111" stroke-width="1.2"/><path d="M2 1.5C9 1 13 2.5 17 6L10 9C8.5 8.5 6 8 3 8Z" fill="#e01010"/><path d="M21 16L25 22C26.5 26 27.5 29 29 32H17C15.5 29 14.5 26 13.5 23Z" fill="#3080ff"/><path d="M9 10L17 6M12 17L21 13M14 24L24 20" stroke="#111" stroke-width="1.2"/><path d="M2 1.5C9 1 13 2.5 17 6L25 22C26.5 26 27.5 29 29 32H17C15.5 29 14.5 26 13.5 23L8.5 11C7.5 9 6 8 3 8Z" fill="none" stroke="#111" stroke-width="1.2"/></svg>
<div style="left:0px;top:90px;width:1920px;height:3px;background:#7a7a7a;"></div>
<div style="left:0px;top:93px;width:1920px;height:1px;background:#cfcfcf;"></div>
<div style="left:0px;top:93px;width:1920px;height:950px;background:#f0f0f0;"></div>
<div style="left:0px;top:94px;width:1905px;height:287px;background:#ffffff;"></div>
<div style="left:1px;top:94px;width:1px;height:950px;background:#808080;"></div>
<div style="left:0px;top:94px;width:1px;height:950px;background:#a8a8a8;"></div>
<div style="left:5px;top:97px;width:1300px;height:57px;background:#ececec;border:2px solid #7c7c7c;"></div>
<div style="left:7px;top:99px;width:1296px;height:8px;background:#8a8a8a;"></div>
<div style="left:7px;top:98px;width:1296px;height:17px;background:linear-gradient(90deg,#e2e9f4,#eef2f9);border-radius:7px 7px 0 0;border-bottom:1px solid #8a8a8a;"></div>
<div class="t" style="left:12.00px;top:100.84px;font-size:12px;font-weight:bold;color:#454545;letter-spacing:0.668px;">View</div>
<div style="left:7px;top:116px;width:1296px;height:36px;background:#ececec;"></div>
<div style="left:9px;top:123px;width:199px;height:22px;background:#fff;border:1px solid #adadad;"></div>
<div class="t" style="left:13.00px;top:128.00px;font-size:13px;color:#111;letter-spacing:0.571px;">Cyan saturation scale</div>
<svg style="position:absolute;left:194px;top:130px" width="10" height="7"><path d="M1 1L5 5L9 1" fill="none" stroke="#333" stroke-width="1.1"/></svg>
<div style="left:216px;top:118px;width:1056px;height:28px;background:#efefef;border-top:1px solid #fff;"></div>
<div class="t" style="left:218.00px;top:120.46px;font-size:16px;font-weight:bold;letter-spacing:0.018px;">Color Space: HDTV Rec709 , White Point: D65, EOTF:  SDR, Power law (black compensation) w/gamma = 2.20, # of measures: 0 [19:51:21]</div>
<div style="left:1279px;top:121px;width:15px;height:11px;background:#efefef;border:1px solid #b0b0b0;"></div>
<div style="left:1279px;top:133px;width:15px;height:11px;background:#efefef;border:1px solid #b0b0b0;"></div>
<svg style="position:absolute;left:1282px;top:123px" width="9" height="20"><path d="M1 6L4.5 2.5L8 6Z" fill="#111"/><path d="M1 15L4.5 18.5L8 15Z" fill="#111"/></svg>
<div style="left:1307px;top:94px;width:1px;height:64px;background:#707070;"></div>
<div style="left:1311px;top:97px;width:306px;height:57px;background:#ececec;border:2px solid #7c7c7c;"></div>
<div style="left:1313px;top:99px;width:302px;height:8px;background:#8a8a8a;"></div>
<div style="left:1313px;top:98px;width:302px;height:17px;background:linear-gradient(90deg,#e2e9f4,#eef2f9);border-radius:7px 7px 0 0;border-bottom:1px solid #8a8a8a;"></div>
<div class="t" style="left:1318.00px;top:100.84px;font-size:12px;font-weight:bold;color:#454545;letter-spacing:0.720px;">Sensor</div>
<div class="t" style="left:1316.00px;top:118.00px;font-size:13px;letter-spacing:0.516px;">Simulated sensor</div>
<div style="left:1316px;top:133px;width:66px;height:17px;background:#efefef;"></div>
<div class="t" style="left:1318.00px;top:135.00px;font-size:13px;letter-spacing:0.489px;">Adaptive</div>
<svg style="position:absolute;left:1423px;top:136px" width="14" height="12"><path d="M1 1L13 6L1 11Z" fill="#6ad44a" stroke="#40a030" stroke-width="0.8"/></svg>
<svg style="position:absolute;left:1588px;top:132px" width="18" height="18" viewBox="0 0 18 18"><path d="M2 3L11 1L12 15L3 17Z" fill="#2a5cc8" stroke="#1a3a90" stroke-width="0.8"/><path d="M4 4L10 3L10.5 13L5 14.5Z" fill="#d8e8ff"/><path d="M6 9L8 12L11 7" stroke="#e0a000" stroke-width="1.3" fill="none"/><path d="M10 11L16 6" stroke="#3070e0" stroke-width="2.2"/><circle cx="16.3" cy="5.7" r="1.2" fill="#e03030"/></svg>
<div style="left:1621px;top:97px;width:120px;height:57px;background:#ececec;border:2px solid #7c7c7c;"></div>
<div style="left:1623px;top:99px;width:116px;height:8px;background:#8a8a8a;"></div>
<div style="left:1623px;top:98px;width:116px;height:17px;background:linear-gradient(90deg,#e2e9f4,#eef2f9);border-radius:7px 7px 0 0;border-bottom:1px solid #8a8a8a;"></div>
<div class="t" style="left:1628.00px;top:100.84px;font-size:12px;font-weight:bold;color:#454545;letter-spacing:0.961px;">Generator</div>
<div class="t" style="left:1624.00px;top:118.00px;font-size:13px;letter-spacing:0.201px;">DVD manual</div>
<svg style="position:absolute;left:1718px;top:133px" width="18" height="18" viewBox="0 0 18 18"><path d="M2 3L11 1L12 15L3 17Z" fill="#2a5cc8" stroke="#1a3a90" stroke-width="0.8"/><path d="M4 4L10 3L10.5 13L5 14.5Z" fill="#d8e8ff"/><path d="M6 9L8 12L11 7" stroke="#e0a000" stroke-width="1.3" fill="none"/><path d="M10 11L16 6" stroke="#3070e0" stroke-width="2.2"/><circle cx="16.3" cy="5.7" r="1.2" fill="#e03030"/></svg>
<div style="left:1745px;top:97px;width:150px;height:57px;background:#ececec;border:2px solid #7c7c7c;"></div>
<div style="left:1747px;top:99px;width:146px;height:8px;background:#8a8a8a;"></div>
<div style="left:1747px;top:98px;width:146px;height:17px;background:linear-gradient(90deg,#e2e9f4,#eef2f9);border-radius:7px 7px 0 0;border-bottom:1px solid #8a8a8a;"></div>
<div class="t" style="left:1752.00px;top:100.84px;font-size:12px;font-weight:bold;color:#454545;letter-spacing:0.962px;">Parameters</div>
<div style="left:1754px;top:118px;width:14px;height:14px;background:#fff;border:1px solid #333;border-radius:2px;"></div>
<div class="t" style="left:1771.00px;top:120.00px;font-size:13px;letter-spacing:0.225px;">Reference</div>
<div style="left:1754px;top:136px;width:14px;height:14px;background:#f4f4f4;border:1px solid #c8c8c8;border-radius:2px;"></div>
<div class="t" style="left:1771.00px;top:137.00px;font-size:13px;color:#a8a8a8;letter-spacing:0.392px;">XYZ Adjustment</div>
<div style="left:1898px;top:94px;width:3px;height:64px;background:#707070;"></div>
<div style="left:2px;top:155px;width:1899px;height:3px;background:#707070;"></div>
<div style="left:5px;top:162px;width:1803px;height:215px;background:#ececec;border:2px solid #7c7c7c;"></div>
<div style="left:7px;top:164px;width:1799px;height:8px;background:#8a8a8a;"></div>
<div style="left:7px;top:163px;width:1799px;height:14px;background:linear-gradient(90deg,#e2e9f4,#eef2f9);border-radius:7px 7px 0 0;"></div>
<div class="t" style="left:14.00px;top:165.69px;font-size:11px;font-weight:bold;color:#3a3a3a;">( Average dE: 1.58 [0.64,1.30,0.49] max: 2.44 [CIE2000] )</div>
<div style="left:6px;top:176px;width:2px;height:200px;background:#00e000;"></div>
<div style="left:6px;top:375px;width:1802px;height:2px;background:#00e000;"></div>
<div style="left:1806px;top:177px;width:2px;height:200px;background:#00e000;"></div>
<div style="left:1790px;top:178px;width:18px;height:2px;background:#00e000;"></div>
<div style="left:9px;top:176px;width:1781px;height:178px;background:#f0f0f0;border-top:2px solid #6e6e6e;border-left:2px solid #6e6e6e;"></div>
<div style="left:10px;top:177px;width:53px;height:24px;background:#f0f0f0;"></div>
<div style="left:10px;top:200px;width:53px;height:2px;background:#6e6e6e;"></div>
<div class="t" style="left:21.75px;top:183.84px;font-size:12px;font-weight:bold;letter-spacing:-0.436px;">% Sat</div>
<div style="left:10px;top:201px;width:53px;height:25px;background:#f0f0f0;"></div>
<div style="left:10px;top:225px;width:53px;height:2px;background:#6e6e6e;"></div>
<div class="t" style="left:33.66px;top:207.84px;font-size:12px;font-weight:bold;">x</div>
<div style="left:10px;top:226px;width:53px;height:25px;background:#f0f0f0;"></div>
<div style="left:10px;top:250px;width:53px;height:2px;background:#6e6e6e;"></div>
<div class="t" style="left:33.66px;top:232.84px;font-size:12px;font-weight:bold;">y</div>
<div style="left:10px;top:251px;width:53px;height:25px;background:#f0f0f0;"></div>
<div style="left:10px;top:275px;width:53px;height:2px;background:#6e6e6e;"></div>
<div class="t" style="left:33.00px;top:257.84px;font-size:12px;font-weight:bold;">Y</div>
<div style="left:10px;top:276px;width:53px;height:25px;background:#f0f0f0;"></div>
<div style="left:10px;top:300px;width:53px;height:2px;background:#6e6e6e;"></div>
<div class="t" style="left:17.62px;top:282.84px;font-size:12px;font-weight:bold;letter-spacing:-0.276px;">Delta E</div>
<div style="left:10px;top:301px;width:53px;height:25px;background:#f0f0f0;"></div>
<div style="left:10px;top:325px;width:53px;height:2px;background:#6e6e6e;"></div>
<div class="t" style="left:15.12px;top:307.84px;font-size:12px;font-weight:bold;letter-spacing:-0.117px;">delta xy</div>
<div style="left:10px;top:326px;width:53px;height:25px;background:#f0f0f0;"></div>
<div style="left:10px;top:350px;width:53px;height:2px;background:#6e6e6e;"></div>
<div class="t" style="left:18.88px;top:332.84px;font-size:12px;font-weight:bold;letter-spacing:-0.346px;">delta L</div>
<div style="left:10px;top:351px;width:53px;height:3px;background:#f0f0f0;"></div>
<div style="left:63px;top:177px;width:2px;height:177px;background:#6e6e6e;"></div>
<div style="left:65px;top:177px;width:340px;height:23px;background:#f0f0f0;"></div>
<div class="t" style="left:231.66px;top:183.84px;font-size:12px;font-weight:bold;">0</div>
<div style="left:406px;top:177px;width:341px;height:23px;background:#bdeeee;"></div>
<div class="t" style="left:570.33px;top:183.84px;font-size:12px;font-weight:bold;">25</div>
<div style="left:748px;top:177px;width:341px;height:23px;background:#90f0f0;"></div>
<div class="t" style="left:912.33px;top:183.84px;font-size:12px;font-weight:bold;">50</div>
<div style="left:1090px;top:177px;width:340px;height:23px;background:#62f0f0;"></div>
<div class="t" style="left:1253.83px;top:183.84px;font-size:12px;font-weight:bold;">75</div>
<div style="left:1431px;top:177px;width:340px;height:23px;background:#32f0f0;"></div>
<div class="t" style="left:1591.49px;top:183.84px;font-size:12px;font-weight:bold;">100</div>
<div style="left:65px;top:200px;width:1706px;height:2px;background:#6e6e6e;"></div>
<div style="left:65px;top:202px;width:340px;height:24px;background:#ffffff;"></div>
<div class="t" style="left:370.29px;top:207.84px;font-size:12px;letter-spacing:-0.581px;">0.3126</div>
<div style="left:406px;top:202px;width:341px;height:24px;background:#ffffff;"></div>
<div class="t" style="left:712.29px;top:207.84px;font-size:12px;letter-spacing:-0.581px;">0.2875</div>
<div style="left:748px;top:202px;width:341px;height:24px;background:#ffffff;"></div>
<div class="t" style="left:1054.29px;top:207.84px;font-size:12px;letter-spacing:-0.581px;">0.2615</div>
<div style="left:1090px;top:202px;width:340px;height:24px;background:#ffffff;"></div>
<div class="t" style="left:1395.29px;top:207.84px;font-size:12px;letter-spacing:-0.581px;">0.2358</div>
<div style="left:1431px;top:202px;width:340px;height:24px;background:#ffffff;"></div>
<div class="t" style="left:1736.29px;top:207.84px;font-size:12px;letter-spacing:-0.581px;">0.2185</div>
<div style="left:65px;top:226px;width:1706px;height:1px;background:#a0a0a0;"></div>
<div style="left:65px;top:227px;width:340px;height:24px;background:#ffffff;"></div>
<div class="t" style="left:370.29px;top:232.84px;font-size:12px;letter-spacing:-0.581px;">0.3294</div>
<div style="left:406px;top:227px;width:341px;height:24px;background:#ffffff;"></div>
<div class="t" style="left:712.29px;top:232.84px;font-size:12px;letter-spacing:-0.581px;">0.3272</div>
<div style="left:748px;top:227px;width:341px;height:24px;background:#ffffff;"></div>
<div class="t" style="left:1054.29px;top:232.84px;font-size:12px;letter-spacing:-0.581px;">0.3272</div>
<div style="left:1090px;top:227px;width:340px;height:24px;background:#ffffff;"></div>
<div class="t" style="left:1395.29px;top:232.84px;font-size:12px;letter-spacing:-0.581px;">0.3292</div>
<div style="left:1431px;top:227px;width:340px;height:24px;background:#ffffff;"></div>
<div class="t" style="left:1736.29px;top:232.84px;font-size:12px;letter-spacing:-0.581px;">0.3330</div>
<div style="left:65px;top:251px;width:1706px;height:1px;background:#a0a0a0;"></div>
<div style="left:65px;top:252px;width:340px;height:24px;background:#ffffff;"></div>
<div class="t" style="left:365.05px;top:257.84px;font-size:12px;letter-spacing:-0.577px;">112.591</div>
<div style="left:406px;top:252px;width:341px;height:24px;background:#ffffff;"></div>
<div class="t" style="left:709.47px;top:257.84px;font-size:12px;letter-spacing:-0.540px;">111.111</div>
<div style="left:748px;top:252px;width:341px;height:24px;background:#ffffff;"></div>
<div class="t" style="left:1048.25px;top:257.84px;font-size:12px;letter-spacing:-0.589px;">109.002</div>
<div style="left:1090px;top:252px;width:340px;height:24px;background:#ffffff;"></div>
<div class="t" style="left:1389.25px;top:257.84px;font-size:12px;letter-spacing:-0.589px;">107.916</div>
<div style="left:1431px;top:252px;width:340px;height:24px;background:#ffffff;"></div>
<div class="t" style="left:1730.25px;top:257.84px;font-size:12px;letter-spacing:-0.589px;">108.281</div>
<div style="left:65px;top:276px;width:1706px;height:1px;background:#a0a0a0;"></div>
<div style="left:65px;top:277px;width:340px;height:24px;background:#b0fcaa;"></div>
<div class="t" style="left:388.40px;top:282.84px;font-size:12px;font-weight:bold;letter-spacing:-0.528px;">0.5</div>
<div style="left:406px;top:277px;width:341px;height:24px;background:#b0fcaa;"></div>
<div class="t" style="left:730.40px;top:282.84px;font-size:12px;font-weight:bold;letter-spacing:-0.528px;">1.1</div>
<div style="left:748px;top:277px;width:341px;height:24px;background:#b0fcaa;"></div>
<div class="t" style="left:1072.40px;top:282.84px;font-size:12px;font-weight:bold;letter-spacing:-0.528px;">1.9</div>
<div style="left:1090px;top:277px;width:340px;height:24px;background:#fffcb0;"></div>
<div class="t" style="left:1413.40px;top:282.84px;font-size:12px;font-weight:bold;letter-spacing:-0.528px;">2.4</div>
<div style="left:1431px;top:277px;width:340px;height:24px;background:#b0fcaa;"></div>
<div class="t" style="left:1754.40px;top:282.84px;font-size:12px;font-weight:bold;letter-spacing:-0.528px;">2.0</div>
<div style="left:65px;top:301px;width:1706px;height:1px;background:#a0a0a0;"></div>
<div style="left:65px;top:302px;width:340px;height:24px;background:#f0f0f0;"></div>
<div class="t" style="left:370.29px;top:307.84px;font-size:12px;letter-spacing:-0.581px;">0.0005</div>
<div style="left:406px;top:302px;width:341px;height:24px;background:#f0f0f0;"></div>
<div class="t" style="left:712.29px;top:307.84px;font-size:12px;letter-spacing:-0.581px;">0.0037</div>
<div style="left:748px;top:302px;width:341px;height:24px;background:#f0f0f0;"></div>
<div class="t" style="left:1054.29px;top:307.84px;font-size:12px;letter-spacing:-0.581px;">0.0078</div>
<div style="left:1090px;top:302px;width:340px;height:24px;background:#f0f0f0;"></div>
<div class="t" style="left:1396.09px;top:307.84px;font-size:12px;letter-spacing:-0.567px;">0.0110</div>
<div style="left:1431px;top:302px;width:340px;height:24px;background:#f0f0f0;"></div>
<div class="t" style="left:1736.29px;top:307.84px;font-size:12px;letter-spacing:-0.581px;">0.0075</div>
<div style="left:65px;top:326px;width:1706px;height:1px;background:#a0a0a0;"></div>
<div style="left:65px;top:327px;width:340px;height:24px;background:#e0e0e0;"></div>
<div class="t" style="left:372.11px;top:332.84px;font-size:12px;letter-spacing:-0.549px;">-0.6 %</div>
<div style="left:406px;top:327px;width:341px;height:24px;background:#e0e0e0;"></div>
<div class="t" style="left:714.11px;top:332.84px;font-size:12px;letter-spacing:-0.549px;">-2.0 %</div>
<div style="left:748px;top:327px;width:341px;height:24px;background:#e0e0e0;"></div>
<div class="t" style="left:1056.11px;top:332.84px;font-size:12px;letter-spacing:-0.549px;">-3.2 %</div>
<div style="left:1090px;top:327px;width:340px;height:24px;background:#e0e0e0;"></div>
<div class="t" style="left:1397.11px;top:332.84px;font-size:12px;letter-spacing:-0.549px;">-4.6 %</div>
<div style="left:1431px;top:327px;width:340px;height:24px;background:#e0e0e0;"></div>
<div class="t" style="left:1738.11px;top:332.84px;font-size:12px;letter-spacing:-0.549px;">-3.8 %</div>
<div style="left:65px;top:351px;width:1706px;height:1px;background:#a0a0a0;"></div>
<div style="left:405px;top:201px;width:1px;height:153px;background:#8a8a8a;"></div>
<div style="left:747px;top:201px;width:1px;height:153px;background:#8a8a8a;"></div>
<div style="left:1089px;top:201px;width:1px;height:153px;background:#8a8a8a;"></div>
<div style="left:1430px;top:201px;width:1px;height:153px;background:#8a8a8a;"></div>
<div style="left:65px;top:352px;width:1706px;height:2px;background:#ececec;"></div>
<div style="left:1771px;top:178px;width:18px;height:176px;background:#efefef;border-left:1px solid #fff;"></div>
<div style="left:1779px;top:195px;width:2px;height:141px;background:#888;"></div>
<div style="left:9px;top:354px;width:1781px;height:19px;background:#f0f0f0;border-top:1px solid #e8e8e8;"></div>
<svg style="position:absolute;left:13px;top:358px" width="10" height="12"><path d="M8 1L2 6L8 11Z" fill="#a0a0a0"/></svg>
<svg style="position:absolute;left:1757px;top:358px" width="10" height="12"><path d="M2 1L8 6L2 11Z" fill="#a0a0a0"/></svg>
<div style="left:1810px;top:158px;width:91px;height:226px;background:#8a8a8a;"></div>
<div style="left:1810px;top:158px;width:91px;height:4px;background:#fff;"></div>
<div style="left:1812px;top:162px;width:85px;height:98px;background:#ececec;border:2px solid #7c7c7c;"></div>
<div style="left:1814px;top:164px;width:81px;height:8px;background:#8a8a8a;"></div>
<div style="left:1814px;top:163px;width:81px;height:17px;background:linear-gradient(90deg,#e2e9f4,#eef2f9);border-radius:7px 7px 0 0;border-bottom:1px solid #8a8a8a;"></div>
<div class="t" style="left:1822.40px;top:165.84px;font-size:12px;font-weight:bold;color:#454545;letter-spacing:0.645px;">Display</div>
<svg style="position:absolute;left:1821px;top:181px" width="14" height="14"><circle cx="7" cy="7" r="5.5" fill="#f8f8f8" stroke="#c8c8c8" stroke-width="1"/></svg>
<div class="t" style="left:1839.00px;top:182.00px;font-size:13px;color:#a8a8a8;">Sensor</div>
<svg style="position:absolute;left:1821px;top:197px" width="14" height="14"><circle cx="7" cy="7" r="5.5" fill="#fff" stroke="#333" stroke-width="1"/></svg>
<div class="t" style="left:1839.00px;top:198.00px;font-size:13px;">RGB</div>
<svg style="position:absolute;left:1821px;top:212px" width="14" height="14"><circle cx="7" cy="7" r="5.5" fill="#fff" stroke="#333" stroke-width="1"/></svg>
<div class="t" style="left:1839.00px;top:213.00px;font-size:13px;">XYZ</div>
<svg style="position:absolute;left:1821px;top:229px" width="14" height="14"><circle cx="7" cy="7" r="5.5" fill="#fff" stroke="#333" stroke-width="1"/></svg>
<div class="t" style="left:1839.00px;top:230.00px;font-size:13px;">xyz</div>
<svg style="position:absolute;left:1821px;top:244px" width="14" height="14"><circle cx="7" cy="7" r="5.5" fill="#fff" stroke="#0a5cc0" stroke-width="2.2"/><circle cx="7" cy="7" r="2.5" fill="#0a5cc0"/></svg>
<div class="t" style="left:1839.00px;top:245.00px;font-size:13px;">xyY</div>
<div style="left:1813px;top:266px;width:82px;height:28px;background:#e6e6e6;border-top:1px solid #fff;border-left:1px solid #fff;border-right:1px solid #a0a0a0;border-bottom:1px solid #a0a0a0;"></div>
<div class="t" style="left:1863.00px;top:274.00px;font-size:13px;letter-spacing:-0.421px;">Go</div>
<div style="left:1813px;top:294px;width:82px;height:30px;background:#e6e6e6;border-top:1px solid #fff;border-left:1px solid #fff;border-right:1px solid #a0a0a0;border-bottom:1px solid #a0a0a0;"></div>
<div class="t" style="left:1851.00px;top:303.00px;font-size:13px;letter-spacing:0.154px;">Delete</div>
<div style="left:1813px;top:324px;width:82px;height:29px;background:#e6e6e6;border-top:1px solid #fff;border-left:1px solid #fff;border-right:1px solid #a0a0a0;border-bottom:1px solid #a0a0a0;"></div>
<div class="t" style="left:1859.00px;top:332.50px;font-size:13px;letter-spacing:-0.057px;">Refs</div>
<svg style="position:absolute;left:1818px;top:267px" width="32" height="27" preserveAspectRatio="none" viewBox="0 0 33 33"><rect x="0.5" y="2.5" width="9" height="25" fill="#a8a8a8" stroke="#222" stroke-width="0.8"/><path d="M1 5H3M1 9H3M1 13H3M1 17H3M1 21H3M1 25H3" stroke="#111" stroke-width="1.2"/><rect x="22.5" y="7.5" width="9" height="25" fill="#a8a8a8" stroke="#222" stroke-width="0.8"/><path d="M29 10H31M29 14H31M29 18H31M29 22H31M29 26H31M29 30H31" stroke="#111" stroke-width="1.2"/><path d="M5 8C10 10 12 12 14 17M18 10C22 12 24 14 26 20" stroke="#555" stroke-width="1.5" fill="none"/><path d="M2 1.5C9 1 13 2.5 17 6L25 22C26.5 26 27.5 29 29 32H17C15.5 29 14.5 26 13.5 23L8.5 11C7.5 9 6 8 3 8Z" fill="#30e0f0" stroke="#111" stroke-width="1.2"/><path d="M2 1.5C9 1 13 2.5 17 6L10 9C8.5 8.5 6 8 3 8Z" fill="#30e0f0"/><path d="M21 16L25 22C26.5 26 27.5 29 29 32H17C15.5 29 14.5 26 13.5 23Z" fill="#30e0f0"/><path d="M9 10L17 6M12 17L21 13M14 24L24 20" stroke="#111" stroke-width="1.2"/><path d="M2 1.5C9 1 13 2.5 17 6L25 22C26.5 26 27.5 29 29 32H17C15.5 29 14.5 26 13.5 23L8.5 11C7.5 9 6 8 3 8Z" fill="none" stroke="#111" stroke-width="1.2"/></svg>
<svg style="position:absolute;left:1819px;top:296px" width="28" height="26" viewBox="0 0 28 26"><path d="M1 4C8 1 20 0 27 2L24 22C18 26 10 26 5 24Z" fill="#a8d4f4" stroke="#6aa0d0" stroke-width="0.8"/><path d="M3 6C10 4 19 4 25 4" stroke="#fff" stroke-width="1.5" fill="none"/><path d="M12 10A5 5 0 0 1 20 12L21 10M19 18A5 5 0 0 1 11 16L10 18" stroke="#20a020" stroke-width="2.6" fill="none"/></svg>
<svg style="position:absolute;left:1818px;top:328px" width="32" height="24" viewBox="0 0 32 24"><path d="M0 24V12L2 10L4 6L6 4L8 8L10 6L12 10L14 8L16 4L18 0L20 2L22 6L24 10L26 8L28 10L32 12V24Z" fill="#ff0"/><rect x="1" y="12" width="2" height="12" fill="#f0f"/><rect x="3" y="8" width="3" height="16" fill="#00f"/><rect x="6" y="10" width="3" height="14" fill="#0cf"/><rect x="9" y="10" width="4" height="14" fill="#0f0"/><rect x="15" y="4" width="4" height="20" fill="#ff0"/><rect x="20" y="6" width="3" height="18" fill="#800"/><rect x="23" y="11" width="9" height="13" fill="#f00"/></svg>
<div style="left:1819px;top:360px;width:14px;height:14px;background:#fff;border:1px solid #333;border-radius:2px;"></div>
<div class="t" style="left:1835.00px;top:361.00px;font-size:13px;letter-spacing:0.400px;">Edit</div>
<div style="left:0px;top:377px;width:1905px;height:665px;background:#f0f0f0;"></div>
<div style="left:2px;top:380px;width:1899px;height:4px;background:#707070;"></div>
<div style="left:2px;top:384px;width:1899px;height:3px;background:#fff;"></div>
<div style="left:0px;top:94px;width:1px;height:950px;background:#a8a8a8;"></div>
<div style="left:1px;top:94px;width:1px;height:950px;background:#808080;"></div>
<div style="left:5px;top:387px;width:378px;height:629px;background:#ececec;border:2px solid #7c7c7c;"></div>
<div style="left:7px;top:389px;width:374px;height:8px;background:#8a8a8a;"></div>
<div style="left:7px;top:388px;width:374px;height:17px;background:linear-gradient(90deg,#e2e9f4,#eef2f9);border-radius:7px 7px 0 0;border-bottom:1px solid #8a8a8a;"></div>
<div class="t" style="left:12.00px;top:390.84px;font-size:12px;font-weight:bold;color:#454545;letter-spacing:0.783px;">Selected color</div>
<div style="left:7px;top:405px;width:374px;height:609px;background:#ebebeb;"></div>
<div style="left:14px;top:409px;width:112px;height:15px;background:#efefef;"></div>
<div class="t" style="left:18.00px;top:409.60px;font-size:13px;letter-spacing:-0.036px;">RGB Levels</div>
<div style="left:230px;top:406px;width:112px;height:15px;background:#efefef;"></div>
<div class="t" style="left:242.00px;top:408.00px;font-size:13px;letter-spacing:0.431px;">Current Measure</div>
<div style="left:14px;top:433px;width:200px;height:87px;background:#efefef;"></div>
<div style="left:14px;top:477px;width:200px;height:1px;border-top:1px dashed #888;"></div>
<svg style="position:absolute;left:14px;top:506px" width="200" height="14" viewBox="0 0 200 14"><path d="M0 8Q25 -1 50 7Q75 -1 100 7Q125 -1 150 7Q175 -1 200 7V14H0Z" fill="#000"/><path d="M4 9Q24 1 47 9Z" fill="#a00000"/><path d="M54 9Q74 1 97 9Z" fill="#00a000"/><path d="M104 9Q124 1 147 9Z" fill="#0000a0"/><path d="M154 9Q174 1 198 9Z" fill="#b08010"/></svg>
<div class="t" style="left:26.00px;top:496.79px;font-size:11px;font-weight:bold;color:#111;font-family:'Liberation Serif',serif;letter-spacing:0.062px;">0.0%</div>
<div class="t" style="left:77.00px;top:496.79px;font-size:11px;font-weight:bold;color:#111;font-family:'Liberation Serif',serif;letter-spacing:0.062px;">0.0%</div>
<div class="t" style="left:128.00px;top:496.79px;font-size:11px;font-weight:bold;color:#111;font-family:'Liberation Serif',serif;letter-spacing:0.062px;">0.0%</div>
<div class="t" style="left:176.25px;top:496.79px;font-size:11px;font-weight:bold;color:#111;font-family:'Liberation Serif',serif;letter-spacing:0.591px;">dE 0.0</div>
<div style="left:16px;top:533px;width:192px;height:74px;background:#efefef;"></div>
<div class="t" style="left:35.50px;top:535.00px;font-size:13px;font-weight:bold;letter-spacing:0.465px;">Measure</div>
<div class="t" style="left:127.50px;top:535.00px;font-size:13px;font-weight:bold;letter-spacing:0.237px;">Reference</div>
<div class="t" style="left:18.00px;top:623.00px;font-size:13px;letter-spacing:-0.105px;">Target</div>
<div style="left:50px;top:638px;width:116px;height:89px;background:conic-gradient(from 0deg at 58px 44px,#40ff00 0deg,#ffc000 52deg,#ff0000 90deg,#ff0080 128deg,#9000c0 180deg,#0000ff 232deg,#00a0a0 270deg,#00ff80 308deg,#40ff00 360deg);border:1px solid #000;"></div>
<svg style="position:absolute;left:50px;top:638px" width="116" height="89" viewBox="0 0 116 89"><rect x="17.5" y="13.5" width="81" height="62" rx="9" fill="#000" stroke="#fff" stroke-width="1"/><path d="M58.5 13V76M15 44.5H102" stroke="#fff" stroke-width="1" stroke-dasharray="3 2"/><ellipse cx="58.5" cy="44.5" rx="21" ry="15.5" fill="none" stroke="#fff" stroke-width="1" stroke-dasharray="3 3"/></svg>
<div style="left:220px;top:430px;width:154px;height:579px;background:#f0f0f0;border-top:2px solid #777;border-left:2px solid #777;"></div>
<div style="left:222px;top:432px;width:52px;height:23px;background:#f0f0f0;"></div>
<div style="left:222px;top:454px;width:52px;height:1.5px;background:#6e6e6e;"></div>
<div style="left:275px;top:432px;width:80px;height:23px;background:#fff;"></div>
<div style="left:275px;top:454px;width:80px;height:1px;background:#b8b8b8;"></div>
<div class="t" style="left:227.00px;top:437.84px;font-size:12px;font-weight:bold;letter-spacing:-0.355px;">Y cd/m</div>
<div class="t" style="left:264.00px;top:435.23px;font-size:8px;font-weight:bold;">2</div>
<div style="left:222px;top:455px;width:52px;height:23px;background:#f0f0f0;"></div>
<div style="left:222px;top:477px;width:52px;height:1.5px;background:#6e6e6e;"></div>
<div style="left:275px;top:455px;width:80px;height:23px;background:#fff;"></div>
<div style="left:275px;top:477px;width:80px;height:1px;background:#b8b8b8;"></div>
<div class="t" style="left:235.75px;top:460.84px;font-size:12px;font-weight:bold;letter-spacing:-0.189px;">Y ftL</div>
<div style="left:222px;top:478px;width:52px;height:23px;background:#f0f0f0;"></div>
<div style="left:222px;top:500px;width:52px;height:1.5px;background:#6e6e6e;"></div>
<div style="left:275px;top:478px;width:80px;height:23px;background:#fff;"></div>
<div style="left:275px;top:500px;width:80px;height:1px;background:#b8b8b8;"></div>
<div class="t" style="left:243.50px;top:483.84px;font-size:12px;font-weight:bold;letter-spacing:-1.064px;">T°</div>
<div style="left:222px;top:501px;width:52px;height:23px;background:#f0f0f0;"></div>
<div style="left:222px;top:523px;width:52px;height:1.5px;background:#6e6e6e;"></div>
<div style="left:275px;top:501px;width:80px;height:23px;background:#dedede;"></div>
<div style="left:275px;top:523px;width:80px;height:1px;background:#b8b8b8;"></div>
<div class="t" style="left:244.50px;top:506.84px;font-size:12px;font-weight:bold;">X</div>
<div style="left:222px;top:524px;width:52px;height:23px;background:#f0f0f0;"></div>
<div style="left:222px;top:546px;width:52px;height:1.5px;background:#6e6e6e;"></div>
<div style="left:275px;top:524px;width:80px;height:23px;background:#dedede;"></div>
<div style="left:275px;top:546px;width:80px;height:1px;background:#b8b8b8;"></div>
<div class="t" style="left:244.50px;top:529.84px;font-size:12px;font-weight:bold;">Y</div>
<div style="left:222px;top:547px;width:52px;height:23px;background:#f0f0f0;"></div>
<div style="left:222px;top:569px;width:52px;height:1.5px;background:#6e6e6e;"></div>
<div style="left:275px;top:547px;width:80px;height:23px;background:#dedede;"></div>
<div style="left:275px;top:569px;width:80px;height:1px;background:#b8b8b8;"></div>
<div class="t" style="left:244.84px;top:552.84px;font-size:12px;font-weight:bold;">Z</div>
<div style="left:222px;top:570px;width:52px;height:23px;background:#f0f0f0;"></div>
<div style="left:222px;top:592px;width:52px;height:1.5px;background:#6e6e6e;"></div>
<div style="left:275px;top:570px;width:80px;height:23px;background:#fff;"></div>
<div style="left:275px;top:592px;width:80px;height:1px;background:#b8b8b8;"></div>
<div class="t" style="left:244.17px;top:575.84px;font-size:12px;font-weight:bold;">R</div>
<div style="left:222px;top:593px;width:52px;height:23px;background:#f0f0f0;"></div>
<div style="left:222px;top:615px;width:52px;height:1.5px;background:#6e6e6e;"></div>
<div style="left:275px;top:593px;width:80px;height:23px;background:#fff;"></div>
<div style="left:275px;top:615px;width:80px;height:1px;background:#b8b8b8;"></div>
<div class="t" style="left:243.83px;top:598.84px;font-size:12px;font-weight:bold;">G</div>
<div style="left:222px;top:616px;width:52px;height:23px;background:#f0f0f0;"></div>
<div style="left:222px;top:638px;width:52px;height:1.5px;background:#6e6e6e;"></div>
<div style="left:275px;top:616px;width:80px;height:23px;background:#fff;"></div>
<div style="left:275px;top:638px;width:80px;height:1px;background:#b8b8b8;"></div>
<div class="t" style="left:244.17px;top:621.84px;font-size:12px;font-weight:bold;">B</div>
<div style="left:222px;top:639px;width:52px;height:23px;background:#f0f0f0;"></div>
<div style="left:222px;top:661px;width:52px;height:1.5px;background:#6e6e6e;"></div>
<div style="left:275px;top:639px;width:80px;height:23px;background:#dedede;"></div>
<div style="left:275px;top:661px;width:80px;height:1px;background:#b8b8b8;"></div>
<div class="t" style="left:245.16px;top:644.84px;font-size:12px;font-weight:bold;">x</div>
<div style="left:222px;top:662px;width:52px;height:23px;background:#f0f0f0;"></div>
<div style="left:222px;top:684px;width:52px;height:1.5px;background:#6e6e6e;"></div>
<div style="left:275px;top:662px;width:80px;height:23px;background:#dedede;"></div>
<div style="left:275px;top:684px;width:80px;height:1px;background:#b8b8b8;"></div>
<div class="t" style="left:245.16px;top:667.84px;font-size:12px;font-weight:bold;">y</div>
<div style="left:222px;top:685px;width:52px;height:23px;background:#f0f0f0;"></div>
<div style="left:222px;top:707px;width:52px;height:1.5px;background:#6e6e6e;"></div>
<div style="left:275px;top:685px;width:80px;height:23px;background:#dedede;"></div>
<div style="left:275px;top:707px;width:80px;height:1px;background:#b8b8b8;"></div>
<div class="t" style="left:244.50px;top:690.84px;font-size:12px;font-weight:bold;">Y</div>
<div style="left:222px;top:708px;width:52px;height:23px;background:#f0f0f0;"></div>
<div style="left:222px;top:730px;width:52px;height:1.5px;background:#6e6e6e;"></div>
<div style="left:275px;top:708px;width:80px;height:23px;background:#fff;"></div>
<div style="left:275px;top:730px;width:80px;height:1px;background:#b8b8b8;"></div>
<div class="t" style="left:245.16px;top:713.84px;font-size:12px;font-weight:bold;">x</div>
<div style="left:222px;top:731px;width:52px;height:23px;background:#f0f0f0;"></div>
<div style="left:222px;top:753px;width:52px;height:1.5px;background:#6e6e6e;"></div>
<div style="left:275px;top:731px;width:80px;height:23px;background:#fff;"></div>
<div style="left:275px;top:753px;width:80px;height:1px;background:#b8b8b8;"></div>
<div class="t" style="left:245.16px;top:736.84px;font-size:12px;font-weight:bold;">y</div>
<div style="left:222px;top:754px;width:52px;height:23px;background:#f0f0f0;"></div>
<div style="left:222px;top:776px;width:52px;height:1.5px;background:#6e6e6e;"></div>
<div style="left:275px;top:754px;width:80px;height:23px;background:#fff;"></div>
<div style="left:275px;top:776px;width:80px;height:1px;background:#b8b8b8;"></div>
<div class="t" style="left:245.50px;top:759.84px;font-size:12px;font-weight:bold;">z</div>
<div style="left:222px;top:777px;width:52px;height:23px;background:#f0f0f0;"></div>
<div style="left:222px;top:799px;width:52px;height:1.5px;background:#6e6e6e;"></div>
<div style="left:275px;top:777px;width:80px;height:23px;background:#dedede;"></div>
<div style="left:275px;top:799px;width:80px;height:1px;background:#b8b8b8;"></div>
<div class="t" style="left:244.84px;top:782.84px;font-size:12px;font-weight:bold;">L</div>
<div style="left:222px;top:800px;width:52px;height:23px;background:#f0f0f0;"></div>
<div style="left:222px;top:822px;width:52px;height:1.5px;background:#6e6e6e;"></div>
<div style="left:275px;top:800px;width:80px;height:23px;background:#dedede;"></div>
<div style="left:275px;top:822px;width:80px;height:1px;background:#b8b8b8;"></div>
<div class="t" style="left:245.16px;top:805.84px;font-size:12px;font-weight:bold;">a</div>
<div style="left:222px;top:823px;width:52px;height:23px;background:#f0f0f0;"></div>
<div style="left:222px;top:845px;width:52px;height:1.5px;background:#6e6e6e;"></div>
<div style="left:275px;top:823px;width:80px;height:23px;background:#dedede;"></div>
<div style="left:275px;top:845px;width:80px;height:1px;background:#b8b8b8;"></div>
<div class="t" style="left:244.84px;top:828.84px;font-size:12px;font-weight:bold;">b</div>
<div style="left:222px;top:846px;width:52px;height:23px;background:#f0f0f0;"></div>
<div style="left:222px;top:868px;width:52px;height:1.5px;background:#6e6e6e;"></div>
<div style="left:275px;top:846px;width:80px;height:23px;background:#fff;"></div>
<div style="left:275px;top:868px;width:80px;height:1px;background:#b8b8b8;"></div>
<div class="t" style="left:244.84px;top:851.84px;font-size:12px;font-weight:bold;">L</div>
<div style="left:222px;top:869px;width:52px;height:23px;background:#f0f0f0;"></div>
<div style="left:222px;top:891px;width:52px;height:1.5px;background:#6e6e6e;"></div>
<div style="left:275px;top:869px;width:80px;height:23px;background:#fff;"></div>
<div style="left:275px;top:891px;width:80px;height:1px;background:#b8b8b8;"></div>
<div class="t" style="left:244.17px;top:874.84px;font-size:12px;font-weight:bold;">C</div>
<div style="left:222px;top:892px;width:52px;height:23px;background:#f0f0f0;"></div>
<div style="left:222px;top:914px;width:52px;height:1.5px;background:#6e6e6e;"></div>
<div style="left:275px;top:892px;width:80px;height:23px;background:#fff;"></div>
<div style="left:275px;top:914px;width:80px;height:1px;background:#b8b8b8;"></div>
<div class="t" style="left:244.17px;top:897.84px;font-size:12px;font-weight:bold;">H</div>
<div style="left:222px;top:915px;width:52px;height:23px;background:#f0f0f0;"></div>
<div style="left:222px;top:937px;width:52px;height:1.5px;background:#6e6e6e;"></div>
<div style="left:275px;top:915px;width:80px;height:23px;background:#dedede;"></div>
<div style="left:275px;top:937px;width:80px;height:1px;background:#b8b8b8;"></div>
<div class="t" style="left:244.84px;top:920.84px;font-size:12px;font-weight:bold;">L</div>
<div style="left:222px;top:938px;width:52px;height:23px;background:#f0f0f0;"></div>
<div style="left:222px;top:960px;width:52px;height:1.5px;background:#6e6e6e;"></div>
<div style="left:275px;top:938px;width:80px;height:23px;background:#dedede;"></div>
<div style="left:275px;top:960px;width:80px;height:1px;background:#b8b8b8;"></div>
<div class="t" style="left:243.50px;top:943.84px;font-size:12px;font-weight:bold;">M</div>
<div style="left:222px;top:961px;width:52px;height:23px;background:#f0f0f0;"></div>
<div style="left:222px;top:983px;width:52px;height:1.5px;background:#6e6e6e;"></div>
<div style="left:275px;top:961px;width:80px;height:23px;background:#dedede;"></div>
<div style="left:275px;top:983px;width:80px;height:1px;background:#b8b8b8;"></div>
<div class="t" style="left:244.50px;top:966.84px;font-size:12px;font-weight:bold;">S</div>
<div style="left:274px;top:432px;width:1.5px;height:552px;background:#6e6e6e;"></div>
<div style="left:222px;top:984px;width:133px;height:22px;background:#a0a0a0;"></div>
<div style="left:355px;top:432px;width:18px;height:575px;background:#efefef;"></div>
<svg style="position:absolute;left:358px;top:437px" width="12" height="570"><path d="M1.5 7L6 2L10.5 7Z" fill="#a8a8a8"/><path d="M1.5 558L6 563L10.5 558Z" fill="#a8a8a8"/></svg>
<div style="left:384px;top:384px;width:3px;height:633px;background:#707070;"></div>
<div style="left:387px;top:384px;width:2px;height:632px;background:#b8b8b8;"></div>
<div style="left:391px;top:388px;width:1504px;height:628px;background:#ececec;border:2px solid #7c7c7c;"></div>
<div style="left:393px;top:390px;width:1500px;height:8px;background:#8a8a8a;"></div>
<div style="left:393px;top:389px;width:1500px;height:17px;background:linear-gradient(90deg,#e2e9f4,#eef2f9);border-radius:7px 7px 0 0;border-bottom:1px solid #8a8a8a;"></div>
<div class="t" style="left:398.00px;top:391.84px;font-size:12px;font-weight:bold;color:#454545;letter-spacing:1.091px;">Information</div>
<div style="left:393px;top:406px;width:1500px;height:608px;background:#ececec;"></div>
<div style="left:399px;top:412px;width:302px;height:22px;background:#fff;border:1px solid #adadad;"></div>
<div class="t" style="left:403.00px;top:417.00px;font-size:13px;color:#111;letter-spacing:-0.310px;">CIE Diagram</div>
<svg style="position:absolute;left:687px;top:419px" width="10" height="7"><path d="M1 1L5 5L9 1" fill="none" stroke="#333" stroke-width="1.1"/></svg>
<div style="left:398px;top:440px;width:1495px;height:568px;background:#fff;border-top:3px solid #8a8a8a;border-left:3px solid #8a8a8a;"></div>
<div style="left:1901px;top:94px;width:19px;height:950px;background:#f0f0f0;"></div>
<div style="left:1901px;top:94px;width:2px;height:950px;background:#fff;"></div>
<div style="left:1909px;top:109px;width:2px;height:869px;background:#808080;"></div>
<div style="left:1918px;top:94px;width:2px;height:948px;background:#fff;"></div>
<div style="left:1898px;top:94px;width:3px;height:928px;background:#707070;"></div>
<div style="left:2px;top:1017px;width:1899px;height:2px;background:#707070;"></div>
<div style="left:2px;top:1019px;width:1899px;height:2px;background:#b8b8b8;"></div>
<div style="left:0px;top:1021px;width:1920px;height:22px;background:#f0f0f0;"></div>
<div style="left:0px;top:1021px;width:1920px;height:1px;background:#fff;"></div>
<div style="left:19px;top:1030px;width:1824px;height:2px;background:#808080;"></div>
<div style="left:0px;top:1040px;width:1920px;height:2px;background:#fff;"></div>
<div style="left:0px;top:1042px;width:1920px;height:1px;background:#000;"></div>
<div id="chart" style="left:402px;top:443px;width:1488px;height:562px;background:#03080c;overflow:hidden">
<div style="left:0;top:0;width:1488px;height:562px;background:conic-gradient(from 0deg at 641.6px 349.0px,#30c010 -6.7deg,#80c000 33.3deg,#c0a800 66.4deg,#c06800 81.3deg,#c03000 88.8deg,#c80030 92.5deg,#c80070 96.0deg,#c800a0 105.2deg,#a800c0 155.4deg,#7000d0 222.3deg,#3000e0 234.5deg,#0040e0 242.5deg,#00a8d0 260.4deg,#00c4c0 275.0deg,#00c490 290.9deg,#00c070 309.4deg,#00c048 329.3deg,#30c010 353.3deg,#80c000 393.3deg);clip-path:path('M1319.2 378.2L1280.5 365.0C1246.8 353.5 1171.8 328.3 1116.8 309.5C1061.8 290.7 990.3 265.5 950.5 252.0C910.7 238.5 893.4 233.6 878.0 228.4C862.6 223.2 873.6 226.1 858.0 220.8C842.4 215.4 801.8 202.3 784.3 196.4C766.8 190.5 781.2 194.7 753.0 185.4C724.8 176.1 653.2 152.8 615.0 140.6C576.8 128.5 555.9 122.0 523.8 112.5C491.7 103.0 443.3 89.5 422.3 83.9C401.3 78.3 405.4 80.2 398.0 78.7C390.6 77.2 389.4 77.0 378.0 74.8C366.6 72.6 344.4 67.8 329.5 65.7C314.6 63.6 301.1 62.8 288.7 62.0C276.4 61.2 265.6 60.6 255.4 61.1C245.2 61.6 236.5 63.3 227.6 64.8C218.7 66.3 209.1 68.4 201.7 70.3C194.3 72.1 189.1 73.6 183.2 75.9C177.3 78.2 172.7 79.9 166.5 84.2C160.3 88.5 151.0 95.5 146.1 101.8C141.2 108.1 139.2 115.7 136.9 122.2C134.6 128.7 133.4 133.3 132.3 140.7C131.2 148.1 130.7 157.3 130.4 166.6C130.1 175.9 130.1 188.3 130.4 196.3C130.7 204.3 131.5 208.0 132.3 214.8C133.1 221.6 133.9 230.8 135.0 237.0C136.1 243.2 136.5 245.0 138.7 252.2C140.9 259.4 144.3 270.5 148.0 280.0C151.7 289.5 157.0 301.2 161.0 309.2C165.0 317.2 168.0 321.5 172.0 328.0C176.0 334.5 180.8 342.3 185.0 348.5C189.2 354.7 191.8 358.0 197.0 365.1C202.2 372.2 212.3 385.7 216.5 391.0C220.7 396.3 217.9 392.0 222.4 397.0C226.9 402.0 237.8 414.4 243.2 420.7C248.6 427.0 247.4 427.4 255.0 434.8C262.6 442.2 281.1 458.0 289.0 465.0C296.9 472.0 295.7 471.4 302.4 477.0C309.1 482.6 320.9 492.7 329.0 498.5C337.1 504.3 345.1 508.3 351.3 511.8C357.5 515.2 360.4 517.1 366.1 519.2C371.8 521.3 379.2 523.8 385.4 524.4C391.6 525.0 387.8 525.2 403.2 523.0L478.0 511.0L950.5 435.8L1319.2 378.2Z')"></div>
<div style="left:0;top:0;width:1488px;height:562px;background:radial-gradient(ellipse 260px 120px at 641.6px 349.0px,#fff 0%,rgba(255,255,255,0.85) 40%,rgba(255,255,255,0) 100%),conic-gradient(from 0deg at 641.6px 349.0px,#00ff60 -22.3deg,#ffff30 72.0deg,#ff3030 89.8deg,#ff30ff 119.2deg,#3030ff 239.9deg,#30ffff 269.7deg,#00ff60 337.7deg,#ffff30 432.0deg);clip-path:polygon(581.0px 201.4px,1162.0px 347.4px,384.7px 498.0px)"></div>
<canvas id="cie" width="1488" height="562" style="position:absolute;left:0;top:0"></canvas>
</div>
<svg style="position:absolute;left:402px;top:443px" width="1488" height="562" viewBox="0 0 1488 562">
<defs><mask id="trimask" maskUnits="userSpaceOnUse" x="0" y="0" width="1488" height="562"><rect width="1488" height="562" fill="#fff"/><polygon points="581.0,201.4 1162.0,347.4 384.7,498.0" fill="#000"/></mask><radialGradient id="shd" cx="0.5" cy="0.5" r="0.5"><stop offset="0.55" stop-color="#000" stop-opacity="0.55"/><stop offset="1" stop-color="#000" stop-opacity="0"/></radialGradient><linearGradient id="refGR" gradientUnits="userSpaceOnUse" x1="620.6" y1="196.6" x2="1182.4" y2="348.3"><stop offset="0" stop-color="#007000"/><stop offset="0.17" stop-color="#007000"/><stop offset="0.2" stop-color="#706400"/><stop offset="0.56" stop-color="#706400"/><stop offset="0.6" stop-color="#8a0000"/><stop offset="1" stop-color="#8a0000"/></linearGradient><linearGradient id="refBG" gradientUnits="userSpaceOnUse" x1="372.7" y1="500.1" x2="620.6" y2="196.6"><stop offset="0" stop-color="#000090"/><stop offset="0.22" stop-color="#000090"/><stop offset="0.3" stop-color="#007080"/><stop offset="0.44" stop-color="#007080"/><stop offset="0.45" stop-color="#808080"/><stop offset="0.61" stop-color="#808080"/><stop offset="0.62" stop-color="#007080"/><stop offset="0.78" stop-color="#007080"/><stop offset="0.82" stop-color="#007000"/><stop offset="1" stop-color="#007000"/></linearGradient><linearGradient id="refRB" gradientUnits="userSpaceOnUse" x1="1182.4" y1="348.3" x2="372.7" y2="500.1"><stop offset="0" stop-color="#8a0000"/><stop offset="0.5" stop-color="#900060"/><stop offset="1" stop-color="#3000a0"/></linearGradient></defs>
<defs><radialGradient id="glow"><stop offset="0" stop-color="#e0fff8" stop-opacity="0.45"/><stop offset="1" stop-color="#e0fff8" stop-opacity="0"/></radialGradient></defs>
<ellipse cx="503" cy="332" rx="55" ry="60" fill="url(#glow)" mask="url(#trimask)"/>
<path d="M124.9 0V562M290.1 0V562M455.4 0V562M620.6 0V562M785.8 0V562M951.1 0V562M1116.3 0V562M1281.6 0V562M0 477.6H1488M0 421.4H1488M0 365.2H1488M0 309.0H1488M0 252.8H1488M0 196.6H1488M0 140.4H1488M0 84.2H1488M0 28.0H1488" stroke="#4a4a4a" stroke-width="1.2" fill="none" mask="url(#trimask)"/>
<path d="M1319.2 378.2L1280.5 365.0C1246.8 353.5 1171.8 328.3 1116.8 309.5C1061.8 290.7 990.3 265.5 950.5 252.0C910.7 238.5 893.4 233.6 878.0 228.4C862.6 223.2 873.6 226.1 858.0 220.8C842.4 215.4 801.8 202.3 784.3 196.4C766.8 190.5 781.2 194.7 753.0 185.4C724.8 176.1 653.2 152.8 615.0 140.6C576.8 128.5 555.9 122.0 523.8 112.5C491.7 103.0 443.3 89.5 422.3 83.9C401.3 78.3 405.4 80.2 398.0 78.7C390.6 77.2 389.4 77.0 378.0 74.8C366.6 72.6 344.4 67.8 329.5 65.7C314.6 63.6 301.1 62.8 288.7 62.0C276.4 61.2 265.6 60.6 255.4 61.1C245.2 61.6 236.5 63.3 227.6 64.8C218.7 66.3 209.1 68.4 201.7 70.3C194.3 72.1 189.1 73.6 183.2 75.9C177.3 78.2 172.7 79.9 166.5 84.2C160.3 88.5 151.0 95.5 146.1 101.8C141.2 108.1 139.2 115.7 136.9 122.2C134.6 128.7 133.4 133.3 132.3 140.7C131.2 148.1 130.7 157.3 130.4 166.6C130.1 175.9 130.1 188.3 130.4 196.3C130.7 204.3 131.5 208.0 132.3 214.8C133.1 221.6 133.9 230.8 135.0 237.0C136.1 243.2 136.5 245.0 138.7 252.2C140.9 259.4 144.3 270.5 148.0 280.0C151.7 289.5 157.0 301.2 161.0 309.2C165.0 317.2 168.0 321.5 172.0 328.0C176.0 334.5 180.8 342.3 185.0 348.5C189.2 354.7 191.8 358.0 197.0 365.1C202.2 372.2 212.3 385.7 216.5 391.0C220.7 396.3 217.9 392.0 222.4 397.0C226.9 402.0 237.8 414.4 243.2 420.7C248.6 427.0 247.4 427.4 255.0 434.8C262.6 442.2 281.1 458.0 289.0 465.0C296.9 472.0 295.7 471.4 302.4 477.0C309.1 482.6 320.9 492.7 329.0 498.5C337.1 504.3 345.1 508.3 351.3 511.8C357.5 515.2 360.4 517.1 366.1 519.2C371.8 521.3 379.2 523.8 385.4 524.4C391.6 525.0 387.8 525.2 403.2 523.0L478.0 511.0L950.5 435.8L1319.2 378.2Z" fill="none" stroke="#f8b800" stroke-width="1.5"/>
<text x="2" y="473.1" font-family="Liberation Sans" font-size="12.5" fill="#f0f0f0">0.1</text>
<text x="2" y="416.9" font-family="Liberation Sans" font-size="12.5" fill="#f0f0f0">0.2</text>
<text x="2" y="360.7" font-family="Liberation Sans" font-size="12.5" fill="#f0f0f0">0.3</text>
<text x="2" y="304.5" font-family="Liberation Sans" font-size="12.5" fill="#f0f0f0">0.4</text>
<text x="2" y="248.3" font-family="Liberation Sans" font-size="12.5" fill="#f0f0f0">0.5</text>
<text x="2" y="192.1" font-family="Liberation Sans" font-size="12.5" fill="#f0f0f0">0.6</text>
<text x="2" y="135.9" font-family="Liberation Sans" font-size="12.5" fill="#f0f0f0">0.7</text>
<text x="2" y="79.7" font-family="Liberation Sans" font-size="12.5" fill="#f0f0f0">0.8</text>
<text x="291.6" y="558" font-family="Liberation Sans" font-size="12.5" fill="#f0f0f0">0.1</text>
<text x="456.9" y="558" font-family="Liberation Sans" font-size="12.5" fill="#f0f0f0">0.2</text>
<text x="622.1" y="558" font-family="Liberation Sans" font-size="12.5" fill="#f0f0f0">0.3</text>
<text x="787.3" y="558" font-family="Liberation Sans" font-size="12.5" fill="#f0f0f0">0.4</text>
<text x="952.6" y="558" font-family="Liberation Sans" font-size="12.5" fill="#f0f0f0">0.5</text>
<text x="1117.8" y="558" font-family="Liberation Sans" font-size="12.5" fill="#f0f0f0">0.6</text>
<text x="1283.1" y="558" font-family="Liberation Sans" font-size="12.5" fill="#f0f0f0">0.7</text>
<text x="1323" y="501" font-family="Liberation Sans" font-weight="bold" font-size="16" fill="#3c3c3c" textLength="155" lengthAdjust="spacingAndGlyphs">hcfr.sourceforge.net</text>
<path d="M278.0 61.7L309.6 39.0" stroke="#c8c8c8" stroke-width="1"/>
<text x="309.6" y="44.7" font-family="Liberation Serif" font-size="14" fill="#d8d8d8" stroke="#000" stroke-width="0.3" textLength="65" lengthAdjust="spacingAndGlyphs">520 nm</text>
<path d="M525.4 112.0L557.0 89.4" stroke="#c8c8c8" stroke-width="1"/>
<text x="557.0" y="95.4" font-family="Liberation Serif" font-size="14" fill="#d8d8d8" stroke="#000" stroke-width="0.3" textLength="65" lengthAdjust="spacingAndGlyphs">540 nm</text>
<path d="M129.5 201.5L99.8 206.2" stroke="#c8c8c8" stroke-width="1"/>
<text x="46.3" y="217.3" font-family="Liberation Serif" font-size="14" fill="#d8d8d8" stroke="#000" stroke-width="0.3" textLength="65" lengthAdjust="spacingAndGlyphs">500 nm</text>
<path d="M753.0 185.4L785.6 163.3" stroke="#c8c8c8" stroke-width="1"/>
<text x="785.6" y="168.5" font-family="Liberation Serif" font-size="14" fill="#d8d8d8" stroke="#000" stroke-width="0.3" textLength="65" lengthAdjust="spacingAndGlyphs">560 nm</text>
<path d="M914.2 239.5L945.5 217.0" stroke="#c8c8c8" stroke-width="1"/>
<text x="945.5" y="222.0" font-family="Liberation Serif" font-size="14" fill="#d8d8d8" stroke="#000" stroke-width="0.3" textLength="65" lengthAdjust="spacingAndGlyphs">580 nm</text>
<path d="M1024.2 277.0L1055.5 255.8" stroke="#c8c8c8" stroke-width="1"/>
<text x="1055.5" y="260.8" font-family="Liberation Serif" font-size="14" fill="#d8d8d8" stroke="#000" stroke-width="0.3" textLength="65" lengthAdjust="spacingAndGlyphs">600 nm</text>
<path d="M1128.0 313.2L1160.5 290.8" stroke="#c8c8c8" stroke-width="1"/>
<text x="1160.5" y="295.8" font-family="Liberation Serif" font-size="14" fill="#d8d8d8" stroke="#000" stroke-width="0.3" textLength="65" lengthAdjust="spacingAndGlyphs">620 nm</text>
<path d="M1243.3 348.6L1273.0 329.0" stroke="#c8c8c8" stroke-width="1"/>
<text x="1273.0" y="333.7" font-family="Liberation Serif" font-size="14" fill="#d8d8d8" stroke="#000" stroke-width="0.3" textLength="65" lengthAdjust="spacingAndGlyphs">640 nm</text>
<path d="M1291.0 368.0L1321.4 346.2" stroke="#c8c8c8" stroke-width="1"/>
<text x="1321.4" y="350.1" font-family="Liberation Serif" font-size="14" fill="#d8d8d8" stroke="#000" stroke-width="0.3" textLength="65" lengthAdjust="spacingAndGlyphs">660 nm</text>
<path d="M1310.5 374.3L1341.8 352.5" stroke="#c8c8c8" stroke-width="1"/>
<text x="1341.8" y="357.2" font-family="Liberation Serif" font-size="14" fill="#d8d8d8" stroke="#000" stroke-width="0.3" textLength="65" lengthAdjust="spacingAndGlyphs">680 nm</text>
<path d="M254.2 435.0L225.5 440.0" stroke="#c8c8c8" stroke-width="1"/>
<text x="170.5" y="450.8" font-family="Liberation Serif" font-size="14" fill="#d8d8d8" stroke="#000" stroke-width="0.3" textLength="65" lengthAdjust="spacingAndGlyphs">480 nm</text>
<path d="M328.0 498.2L298.0 503.2" stroke="#c8c8c8" stroke-width="1"/>
<text x="244.2" y="513.2" font-family="Liberation Serif" font-size="14" fill="#d8d8d8" stroke="#000" stroke-width="0.3" textLength="65" lengthAdjust="spacingAndGlyphs">460 nm</text>
<path d="M351.8 513.2L321.8 518.2" stroke="#c8c8c8" stroke-width="1"/>
<text x="268.0" y="528.8" font-family="Liberation Serif" font-size="14" fill="#d8d8d8" stroke="#000" stroke-width="0.3" textLength="65" lengthAdjust="spacingAndGlyphs">440 nm</text>
<path d="M368.0 520.0L338.0 525.8" stroke="#c8c8c8" stroke-width="1"/>
<text x="283.0" y="536.2" font-family="Liberation Serif" font-size="14" fill="#d8d8d8" stroke="#000" stroke-width="0.3" textLength="65" lengthAdjust="spacingAndGlyphs">420 nm</text>
<path d="M5 348.5H1483M641.5999999999999 4V554" stroke="#d0d0d0" stroke-width="1.3" stroke-dasharray="3 3"/>
<path d="M5 348.5H1483M641.5999999999999 4V554" stroke="#202020" stroke-width="1.3" stroke-dasharray="3 3" stroke-dashoffset="3" mask="url(#trimask2)" opacity="0.0"/>
<path d="M620.6 196.6L1182.4 348.3" stroke="url(#refGR)" stroke-width="2.8"/>
<path d="M1182.4 348.3L372.7 500.1" stroke="url(#refRB)" stroke-width="2.8"/>
<path d="M372.7 500.1L620.6 196.6" stroke="url(#refBG)" stroke-width="2.8"/>
<polygon points="581.0,201.4 1162.0,347.4 384.7,498.0" fill="none" stroke="#fff" stroke-width="3.6" stroke-linejoin="miter"/>
<path d="M641.6 349.0L581.0 201.4" stroke="#303030" stroke-width="1" stroke-dasharray="3 3"/>
<path d="M641.6 349.0L801.1 258.7" stroke="#303030" stroke-width="1" stroke-dasharray="3 3"/>
<path d="M641.6 349.0L384.7 498.0" stroke="#303030" stroke-width="1" stroke-dasharray="3 3"/>
<path d="M641.6 349.0L684.5 439.5" stroke="#303030" stroke-width="1" stroke-dasharray="3 3"/>
<path d="M535.3 396.3L596.7 367.9C614.2 360.4 626.6 355.8 640.0 351.0C653.4 346.2 658.0 344.3 677.3 339.0C696.6 333.7 727.4 325.0 756.0 319.0C784.6 313.0 827.2 306.1 848.9 302.9C870.6 299.6 877.3 300.4 886.0 299.5C894.7 298.6 959.5 281.4 901.0 297.5" fill="none" stroke="#000" stroke-width="1.5"/>
<circle cx="596.7" cy="367.9" r="3.2" fill="#fff" stroke="#000" stroke-width="1"/>
<circle cx="677.3" cy="339.0" r="3.2" fill="#fff" stroke="#000" stroke-width="1"/>
<circle cx="756.0" cy="319.0" r="3.2" fill="#fff" stroke="#000" stroke-width="1"/>
<circle cx="848.9" cy="302.9" r="3.2" fill="#fff" stroke="#000" stroke-width="1"/>
<circle cx="885.5" cy="300.0" r="3.2" fill="#fff" stroke="#000" stroke-width="1"/>
<circle cx="700.2" cy="335.9" r="3" fill="#20d020" stroke="#006000" stroke-width="0.6"/>
<circle cx="863.8" cy="303.9" r="3" fill="#20d020" stroke="#006000" stroke-width="0.6"/>
<text x="567.8" y="362.1" font-family="Liberation Serif" font-size="13" fill="#1a1a1a" textLength="26.5" lengthAdjust="spacingAndGlyphs">9300</text>
<text x="607.5" y="347.4" font-family="Liberation Serif" font-size="13" fill="#1a1a1a" textLength="24" lengthAdjust="spacingAndGlyphs">D65</text>
<text x="647.2" y="333.0" font-family="Liberation Serif" font-size="13" fill="#1a1a1a" textLength="27.7" lengthAdjust="spacingAndGlyphs">5500</text>
<text x="727.8" y="312.5" font-family="Liberation Serif" font-size="13" fill="#1a1a1a" textLength="26.5" lengthAdjust="spacingAndGlyphs">4000</text>
<text x="824.0" y="296.9" font-family="Liberation Serif" font-size="13" fill="#1a1a1a" textLength="26.6" lengthAdjust="spacingAndGlyphs">3000</text>
<text x="884.5" y="294.0" font-family="Liberation Serif" font-size="13" fill="#1a1a1a" textLength="26.5" lengthAdjust="spacingAndGlyphs">2700</text>
<text x="861.4" y="319.7" font-family="Liberation Serif" font-size="13" fill="#1a1a1a" textLength="9.6" lengthAdjust="spacingAndGlyphs">A</text>
<text x="705.0" y="352.2" font-family="Liberation Serif" font-size="13" fill="#1a1a1a" textLength="7.2" lengthAdjust="spacingAndGlyphs">B</text>
<rect x="551.5" y="326.0" width="10" height="10" fill="none" stroke="#d89040" stroke-width="2"/><rect x="553.0" y="327.5" width="7" height="7" fill="none" stroke="#607050" stroke-width="1" opacity="0.8"/>
<rect x="462.6" y="377.2" width="10" height="10" fill="none" stroke="#d89040" stroke-width="2"/><rect x="464.1" y="378.7" width="7" height="7" fill="none" stroke="#607050" stroke-width="1" opacity="0.8"/>
<rect x="530.8" y="379.4" width="10" height="10" fill="none" stroke="#d89040" stroke-width="2"/><rect x="532.3" y="380.9" width="7" height="7" fill="none" stroke="#607050" stroke-width="1" opacity="0.8"/>
<rect x="563.4" y="386.0" width="10" height="10" fill="none" stroke="#d89040" stroke-width="2"/><rect x="564.9" y="387.5" width="7" height="7" fill="none" stroke="#607050" stroke-width="1" opacity="0.8"/>
<rect x="595.2" y="407.6" width="10" height="10" fill="none" stroke="#d89040" stroke-width="2"/><rect x="596.7" y="409.1" width="7" height="7" fill="none" stroke="#607050" stroke-width="1" opacity="0.8"/>
<rect x="473.0" y="422.4" width="10" height="10" fill="none" stroke="#d89040" stroke-width="2"/><rect x="474.5" y="423.9" width="7" height="7" fill="none" stroke="#607050" stroke-width="1" opacity="0.8"/>
<rect x="430.2" y="451.4" width="10" height="10" fill="none" stroke="#d89040" stroke-width="2"/><rect x="431.7" y="452.9" width="7" height="7" fill="none" stroke="#607050" stroke-width="1" opacity="0.8"/>
<rect x="623.4" y="250.5" width="10" height="10" fill="none" stroke="#d89040" stroke-width="2"/><rect x="624.9" y="252.0" width="7" height="7" fill="none" stroke="#607050" stroke-width="1" opacity="0.8"/>
<rect x="683.2" y="286.0" width="10" height="10" fill="none" stroke="#d89040" stroke-width="2"/><rect x="684.7" y="287.5" width="7" height="7" fill="none" stroke="#607050" stroke-width="1" opacity="0.8"/>
<rect x="742.4" y="250.0" width="10" height="10" fill="none" stroke="#d89040" stroke-width="2"/><rect x="743.9" y="251.5" width="7" height="7" fill="none" stroke="#607050" stroke-width="1" opacity="0.8"/>
<rect x="859.1" y="261.0" width="10" height="10" fill="none" stroke="#d89040" stroke-width="2"/><rect x="860.6" y="262.5" width="7" height="7" fill="none" stroke="#607050" stroke-width="1" opacity="0.8"/>
<rect x="904.5" y="279.6" width="10" height="10" fill="none" stroke="#d89040" stroke-width="2"/><rect x="906.0" y="281.1" width="7" height="7" fill="none" stroke="#607050" stroke-width="1" opacity="0.8"/>
<rect x="743.4" y="328.7" width="10" height="10" fill="none" stroke="#d89040" stroke-width="2"/><rect x="744.9" y="330.2" width="7" height="7" fill="none" stroke="#607050" stroke-width="1" opacity="0.8"/>
<rect x="790.6" y="324.0" width="10" height="10" fill="none" stroke="#d89040" stroke-width="2"/><rect x="792.1" y="325.5" width="7" height="7" fill="none" stroke="#607050" stroke-width="1" opacity="0.8"/>
<rect x="886.0" y="352.7" width="10" height="10" fill="none" stroke="#d89040" stroke-width="2"/><rect x="887.5" y="354.2" width="7" height="7" fill="none" stroke="#607050" stroke-width="1" opacity="0.8"/>
<rect x="736.0" y="390.7" width="10" height="10" fill="none" stroke="#d89040" stroke-width="2"/><rect x="737.5" y="392.2" width="7" height="7" fill="none" stroke="#607050" stroke-width="1" opacity="0.8"/>
<rect x="969.7" y="298.7" width="10" height="10" fill="none" stroke="#d89040" stroke-width="2"/><rect x="971.2" y="300.2" width="7" height="7" fill="none" stroke="#607050" stroke-width="1" opacity="0.8"/>
<rect x="1024.5" y="349.0" width="10" height="10" fill="none" stroke="#d89040" stroke-width="2"/><rect x="1026.0" y="350.5" width="7" height="7" fill="none" stroke="#607050" stroke-width="1" opacity="0.8"/>
<rect x="637.4" y="340.9" width="10" height="10" fill="none" stroke="#d89040" stroke-width="2"/><rect x="638.9" y="342.4" width="7" height="7" fill="none" stroke="#607050" stroke-width="1" opacity="0.8"/>
<rect x="490.0" y="343.9" width="10" height="10" fill="#30f0f0" opacity="0.85"/><path d="M491.5 347.9Q495.0 343.9 498.5 347.9L495.0 352.9Z" fill="#777" opacity="0.7"/><rect x="490.0" y="343.9" width="10" height="10" fill="none" stroke="#30f0f0" stroke-width="2"/><path d="M489.0 354.9V342.9H501.0" fill="none" stroke="#000080" stroke-width="1"/><path d="M501.0 343.9V354.9H490.0" fill="none" stroke="#ff0000" stroke-width="1"/><path d="M491.5 348.4H498.5M495.0 344.9V351.9" stroke="#000" stroke-width="1.2"/>
<rect x="526.3" y="344.1" width="10" height="10" fill="#a0ffff" stroke="#30f0f0" stroke-width="2"/><path d="M525.3 355.1V343.1H537.3" fill="none" stroke="#000080" stroke-width="1"/><path d="M537.3 344.1V355.1H526.3" fill="none" stroke="#ff0000" stroke-width="1"/>
<rect x="563.4" y="344.1" width="10" height="10" fill="#a0ffff" stroke="#30f0f0" stroke-width="2"/><path d="M562.4 355.1V343.1H574.4" fill="none" stroke="#000080" stroke-width="1"/><path d="M574.4 344.1V355.1H563.4" fill="none" stroke="#ff0000" stroke-width="1"/>
<rect x="599.7" y="344.1" width="10" height="10" fill="#a0ffff" stroke="#30f0f0" stroke-width="2"/><path d="M598.7 355.1V343.1H610.7" fill="none" stroke="#000080" stroke-width="1"/><path d="M610.7 344.1V355.1H599.7" fill="none" stroke="#ff0000" stroke-width="1"/>
<rect x="615.2" y="190.5" width="10" height="10" fill="#30ff30" opacity="0.85"/><path d="M616.7 194.5Q620.2 190.5 623.7 194.5L620.2 199.5Z" fill="#777" opacity="0.7"/><rect x="615.2" y="190.5" width="10" height="10" fill="none" stroke="#30ff30" stroke-width="2"/><path d="M614.2 201.5V189.5H626.2" fill="none" stroke="#000080" stroke-width="1"/><path d="M626.2 190.5V201.5H615.2" fill="none" stroke="#ff0000" stroke-width="1"/><path d="M616.7 195.0H623.7M620.2 191.5V198.5" stroke="#000" stroke-width="1.2"/>
<rect x="620.4" y="230.5" width="10" height="10" fill="#80ff60" stroke="#30ff30" stroke-width="2"/><path d="M619.4 241.5V229.5H631.4" fill="none" stroke="#000080" stroke-width="1"/><path d="M631.4 230.5V241.5H620.4" fill="none" stroke="#ff0000" stroke-width="1"/>
<rect x="625.6" y="268.3" width="10" height="10" fill="#80ff60" stroke="#30ff30" stroke-width="2"/><path d="M624.6 279.3V267.3H636.6" fill="none" stroke="#000080" stroke-width="1"/><path d="M636.6 268.3V279.3H625.6" fill="none" stroke="#ff0000" stroke-width="1"/>
<rect x="630.8" y="305.3" width="10" height="10" fill="#80ff60" stroke="#30ff30" stroke-width="2"/><path d="M629.8 316.3V304.3H641.8" fill="none" stroke="#000080" stroke-width="1"/><path d="M641.8 305.3V316.3H630.8" fill="none" stroke="#ff0000" stroke-width="1"/>
<rect x="811.9" y="244.4" width="10" height="10" fill="#ffe800" opacity="0.85"/><path d="M813.4 248.4Q816.9 244.4 820.4 248.4L816.9 253.4Z" fill="#777" opacity="0.7"/><rect x="811.9" y="244.4" width="10" height="10" fill="none" stroke="#ffe800" stroke-width="2"/><path d="M810.9 255.4V243.4H822.9" fill="none" stroke="#000080" stroke-width="1"/><path d="M822.9 244.4V255.4H811.9" fill="none" stroke="#ff0000" stroke-width="1"/><path d="M813.4 248.9H820.4M816.9 245.4V252.4" stroke="#000" stroke-width="1.2"/>
<rect x="768.4" y="269.4" width="10" height="10" fill="#ffe840" stroke="#ffe800" stroke-width="2"/><path d="M767.4 280.4V268.4H779.4" fill="none" stroke="#000080" stroke-width="1"/><path d="M779.4 269.4V280.4H768.4" fill="none" stroke="#ff0000" stroke-width="1"/>
<rect x="723.0" y="294.4" width="10" height="10" fill="#ffe840" stroke="#ffe800" stroke-width="2"/><path d="M722.0 305.4V293.4H734.0" fill="none" stroke="#000080" stroke-width="1"/><path d="M734.0 294.4V305.4H723.0" fill="none" stroke="#ff0000" stroke-width="1"/>
<rect x="679.5" y="318.5" width="10" height="10" fill="#ffe840" stroke="#ffe800" stroke-width="2"/><path d="M678.5 329.5V317.5H690.5" fill="none" stroke="#000080" stroke-width="1"/><path d="M690.5 318.5V329.5H679.5" fill="none" stroke="#ff0000" stroke-width="1"/>
<rect x="1177.0" y="343.1" width="10" height="10" fill="#ff2020" opacity="0.85"/><path d="M1178.5 347.1Q1182.0 343.1 1185.5 347.1L1182.0 352.1Z" fill="#777" opacity="0.7"/><rect x="1177.0" y="343.1" width="10" height="10" fill="none" stroke="#ff2020" stroke-width="2"/><path d="M1176.0 354.1V342.1H1188.0" fill="none" stroke="#000080" stroke-width="1"/><path d="M1188.0 343.1V354.1H1177.0" fill="none" stroke="#ff0000" stroke-width="1"/><path d="M1178.5 347.6H1185.5M1182.0 344.1V351.1" stroke="#fff" stroke-width="1.2"/>
<rect x="1040.8" y="343.1" width="10" height="10" fill="none" stroke="#ff2020" stroke-width="2"/><path d="M1039.8 354.1V342.1H1051.8" fill="none" stroke="#000080" stroke-width="1"/><path d="M1051.8 343.1V354.1H1040.8" fill="none" stroke="#ff0000" stroke-width="1"/>
<rect x="902.6" y="342.6" width="10" height="10" fill="none" stroke="#ff2020" stroke-width="2"/><path d="M901.6 353.6V341.6H913.6" fill="none" stroke="#000080" stroke-width="1"/><path d="M913.6 342.6V353.6H902.6" fill="none" stroke="#ff0000" stroke-width="1"/>
<rect x="769.3" y="342.6" width="10" height="10" fill="none" stroke="#ff2020" stroke-width="2"/><path d="M768.3 353.6V341.6H780.3" fill="none" stroke="#000080" stroke-width="1"/><path d="M780.3 342.6V353.6H769.3" fill="none" stroke="#ff0000" stroke-width="1"/>
<rect x="648.9" y="441.5" width="10" height="10" fill="#ff20ff" opacity="0.85"/><path d="M650.4 445.5Q653.9 441.5 657.4 445.5L653.9 450.5Z" fill="#777" opacity="0.7"/><rect x="648.9" y="441.5" width="10" height="10" fill="none" stroke="#ff20ff" stroke-width="2"/><path d="M647.9 452.5V440.5H659.9" fill="none" stroke="#000080" stroke-width="1"/><path d="M659.9 441.5V452.5H648.9" fill="none" stroke="#ff0000" stroke-width="1"/><path d="M650.4 446.0H657.4M653.9 442.5V449.5" stroke="#000" stroke-width="1.2"/>
<rect x="645.9" y="416.7" width="10" height="10" fill="#ffa0ff" stroke="#ff20ff" stroke-width="2"/><path d="M644.9 427.7V415.7H656.9" fill="none" stroke="#000080" stroke-width="1"/><path d="M656.9 416.7V427.7H645.9" fill="none" stroke="#ff0000" stroke-width="1"/>
<rect x="642.6" y="392.7" width="10" height="10" fill="#ffa0ff" stroke="#ff20ff" stroke-width="2"/><path d="M641.6 403.7V391.7H653.6" fill="none" stroke="#000080" stroke-width="1"/><path d="M653.6 392.7V403.7H642.6" fill="none" stroke="#ff0000" stroke-width="1"/>
<rect x="639.7" y="367.6" width="10" height="10" fill="#ffa0ff" stroke="#ff20ff" stroke-width="2"/><path d="M638.7 378.6V366.6H650.7" fill="none" stroke="#000080" stroke-width="1"/><path d="M650.7 367.6V378.6H639.7" fill="none" stroke="#ff0000" stroke-width="1"/>
<rect x="365.9" y="494.9" width="10" height="10" fill="#4040ff" opacity="0.85"/><path d="M367.4 498.9Q370.9 494.9 374.4 498.9L370.9 503.9Z" fill="#777" opacity="0.7"/><rect x="365.9" y="494.9" width="10" height="10" fill="none" stroke="#4040ff" stroke-width="2"/><path d="M364.9 505.9V493.9H376.9" fill="none" stroke="#000080" stroke-width="1"/><path d="M376.9 494.9V505.9H365.9" fill="none" stroke="#ff0000" stroke-width="1"/><path d="M367.4 499.4H374.4M370.9 495.9V502.9" stroke="#fff" stroke-width="1.2"/>
<rect x="436.1" y="456.3" width="10" height="10" fill="none" stroke="#4040ff" stroke-width="2"/><path d="M435.1 467.3V455.3H447.1" fill="none" stroke="#000080" stroke-width="1"/><path d="M447.1 456.3V467.3H436.1" fill="none" stroke="#ff0000" stroke-width="1"/>
<rect x="501.4" y="419.7" width="10" height="10" fill="none" stroke="#4040ff" stroke-width="2"/><path d="M500.4 430.7V418.7H512.4" fill="none" stroke="#000080" stroke-width="1"/><path d="M512.4 419.7V430.7H501.4" fill="none" stroke="#ff0000" stroke-width="1"/>
<rect x="568.6" y="382.4" width="10" height="10" fill="none" stroke="#4040ff" stroke-width="2"/><path d="M567.6 393.4V381.4H579.6" fill="none" stroke="#000080" stroke-width="1"/><path d="M579.6 382.4V393.4H568.6" fill="none" stroke="#ff0000" stroke-width="1"/>
<circle cx="486.2" cy="348.6" r="9.0" fill="url(#shd)"/><circle cx="484.7" cy="346.6" r="6.5" fill="#58d8d8" stroke="#222" stroke-width="1"/><circle cx="482.9" cy="344.8" r="2.9" fill="#c0ffff" opacity="0.6"/><circle cx="484.7" cy="347.1" r="0.9" fill="#000"/>
<circle cx="514.3" cy="350.1" r="9.0" fill="url(#shd)"/><circle cx="512.8" cy="348.1" r="6.5" fill="#58d8d8" stroke="#222" stroke-width="1"/><circle cx="511.0" cy="346.3" r="2.9" fill="#c0ffff" opacity="0.6"/><circle cx="512.8" cy="348.6" r="0.9" fill="#000"/>
<circle cx="557.3" cy="351.6" r="9.0" fill="url(#shd)"/><circle cx="555.8" cy="349.6" r="6.5" fill="#58d8d8" stroke="#222" stroke-width="1"/><circle cx="554.0" cy="347.8" r="2.9" fill="#c0ffff" opacity="0.6"/><circle cx="555.8" cy="350.1" r="0.9" fill="#000"/>
<circle cx="601.0" cy="353.0" r="9.0" fill="url(#shd)"/><circle cx="599.5" cy="351.0" r="6.5" fill="#58d8d8" stroke="#222" stroke-width="1"/><circle cx="597.7" cy="349.2" r="2.9" fill="#c0ffff" opacity="0.6"/><circle cx="599.5" cy="351.5" r="0.9" fill="#000"/>
<circle cx="582.5" cy="203.4" r="9.0" fill="url(#shd)"/><circle cx="581.0" cy="201.4" r="6.5" fill="#00c000" stroke="#222" stroke-width="1"/><circle cx="579.2" cy="199.6" r="2.9" fill="#a0ffa0" opacity="0.6"/><circle cx="581.0" cy="201.9" r="0.9" fill="#000"/>
<circle cx="588.4" cy="239.7" r="9.0" fill="url(#shd)"/><circle cx="586.9" cy="237.7" r="6.5" fill="#00c000" stroke="#222" stroke-width="1"/><circle cx="585.1" cy="235.9" r="2.9" fill="#a0ffa0" opacity="0.6"/><circle cx="586.9" cy="238.2" r="0.9" fill="#000"/>
<circle cx="606.9" cy="279.0" r="9.0" fill="url(#shd)"/><circle cx="605.4" cy="277.0" r="6.5" fill="#00c000" stroke="#222" stroke-width="1"/><circle cx="603.6" cy="275.2" r="2.9" fill="#a0ffa0" opacity="0.6"/><circle cx="605.4" cy="277.5" r="0.9" fill="#000"/>
<circle cx="626.9" cy="314.6" r="9.0" fill="url(#shd)"/><circle cx="625.4" cy="312.6" r="6.5" fill="#00c000" stroke="#222" stroke-width="1"/><circle cx="623.6" cy="310.8" r="2.9" fill="#a0ffa0" opacity="0.6"/><circle cx="625.4" cy="313.1" r="0.9" fill="#000"/>
<circle cx="802.6" cy="260.7" r="9.0" fill="url(#shd)"/><circle cx="801.1" cy="258.7" r="6.5" fill="#e0e080" stroke="#222" stroke-width="1"/><circle cx="799.3" cy="256.9" r="2.9" fill="#ffffd0" opacity="0.6"/><circle cx="801.1" cy="259.2" r="0.9" fill="#000"/>
<circle cx="765.6" cy="283.8" r="9.0" fill="url(#shd)"/><circle cx="764.1" cy="281.8" r="6.5" fill="#e0e080" stroke="#222" stroke-width="1"/><circle cx="762.3" cy="280.0" r="2.9" fill="#ffffd0" opacity="0.6"/><circle cx="764.1" cy="282.3" r="0.9" fill="#000"/>
<circle cx="725.8" cy="307.0" r="9.0" fill="url(#shd)"/><circle cx="724.3" cy="305.0" r="6.5" fill="#e0e080" stroke="#222" stroke-width="1"/><circle cx="722.5" cy="303.2" r="2.9" fill="#ffffd0" opacity="0.6"/><circle cx="724.3" cy="305.5" r="0.9" fill="#000"/>
<circle cx="686.0" cy="328.3" r="9.0" fill="url(#shd)"/><circle cx="684.5" cy="326.3" r="6.5" fill="#e0e080" stroke="#222" stroke-width="1"/><circle cx="682.7" cy="324.5" r="2.9" fill="#ffffd0" opacity="0.6"/><circle cx="684.5" cy="326.8" r="0.9" fill="#000"/>
<circle cx="1163.5" cy="349.4" r="9.0" fill="url(#shd)"/><circle cx="1162.0" cy="347.4" r="6.5" fill="#e02020" stroke="#222" stroke-width="1"/><circle cx="1160.2" cy="345.6" r="2.9" fill="#ff8080" opacity="0.6"/>
<circle cx="1042.8" cy="351.6" r="9.0" fill="url(#shd)"/><circle cx="1041.3" cy="349.6" r="6.5" fill="#e02020" stroke="#222" stroke-width="1"/><circle cx="1039.5" cy="347.8" r="2.9" fill="#ff8080" opacity="0.6"/>
<circle cx="921.2" cy="352.3" r="9.0" fill="url(#shd)"/><circle cx="919.7" cy="350.3" r="6.5" fill="#e02020" stroke="#222" stroke-width="1"/><circle cx="917.9" cy="348.5" r="2.9" fill="#ff8080" opacity="0.6"/>
<circle cx="786.9" cy="352.3" r="9.0" fill="url(#shd)"/><circle cx="785.4" cy="350.3" r="6.5" fill="#e02020" stroke="#222" stroke-width="1"/><circle cx="783.6" cy="348.5" r="2.9" fill="#ff8080" opacity="0.6"/>
<circle cx="653.5" cy="375.3" r="9.0" fill="url(#shd)"/><circle cx="652.0" cy="373.3" r="6.5" fill="#d010d0" stroke="#222" stroke-width="1"/><circle cx="650.2" cy="371.5" r="2.9" fill="#ff80ff" opacity="0.6"/><circle cx="652.0" cy="373.8" r="0.9" fill="#000"/>
<circle cx="663.9" cy="398.3" r="9.0" fill="url(#shd)"/><circle cx="662.4" cy="396.3" r="6.5" fill="#d010d0" stroke="#222" stroke-width="1"/><circle cx="660.6" cy="394.5" r="2.9" fill="#ff80ff" opacity="0.6"/><circle cx="662.4" cy="396.8" r="0.9" fill="#000"/>
<circle cx="674.2" cy="420.8" r="9.0" fill="url(#shd)"/><circle cx="672.7" cy="418.8" r="6.5" fill="#d010d0" stroke="#222" stroke-width="1"/><circle cx="670.9" cy="417.0" r="2.9" fill="#ff80ff" opacity="0.6"/><circle cx="672.7" cy="419.3" r="0.9" fill="#000"/>
<circle cx="686.0" cy="441.5" r="9.0" fill="url(#shd)"/><circle cx="684.5" cy="439.5" r="6.5" fill="#d010d0" stroke="#222" stroke-width="1"/><circle cx="682.7" cy="437.7" r="2.9" fill="#ff80ff" opacity="0.6"/><circle cx="684.5" cy="440.0" r="0.9" fill="#000"/>
<circle cx="386.2" cy="500.0" r="9.0" fill="url(#shd)"/><circle cx="384.7" cy="498.0" r="6.5" fill="#2030e0" stroke="#222" stroke-width="1"/><circle cx="382.9" cy="496.2" r="2.9" fill="#8090ff" opacity="0.6"/>
<circle cx="436.7" cy="465.3" r="9.0" fill="url(#shd)"/><circle cx="435.2" cy="463.3" r="6.5" fill="#2030e0" stroke="#222" stroke-width="1"/><circle cx="433.4" cy="461.5" r="2.9" fill="#8090ff" opacity="0.6"/>
<circle cx="510.9" cy="423.7" r="9.0" fill="url(#shd)"/><circle cx="509.4" cy="421.7" r="6.5" fill="#2030e0" stroke="#222" stroke-width="1"/><circle cx="507.6" cy="419.9" r="2.9" fill="#8090ff" opacity="0.6"/>
<circle cx="572.8" cy="387.9" r="9.0" fill="url(#shd)"/><circle cx="571.3" cy="385.9" r="6.5" fill="#2030e0" stroke="#222" stroke-width="1"/><circle cx="569.5" cy="384.1" r="2.9" fill="#8090ff" opacity="0.6"/>
<circle cx="535.8" cy="330.9" r="8" fill="url(#shd)"/><circle cx="534.3" cy="328.9" r="6" fill="#f8f8f8" stroke="#333" stroke-width="1"/>
<circle cx="461.0" cy="382.0" r="8" fill="url(#shd)"/><circle cx="459.5" cy="380.0" r="6" fill="#f8f8f8" stroke="#333" stroke-width="1"/>
<circle cx="526.9" cy="385.7" r="8" fill="url(#shd)"/><circle cx="525.4" cy="383.7" r="6" fill="#f8f8f8" stroke="#333" stroke-width="1"/>
<circle cx="569.1" cy="393.0" r="8" fill="url(#shd)"/><circle cx="567.6" cy="391.0" r="6" fill="#f8f8f8" stroke="#333" stroke-width="1"/>
<circle cx="614.3" cy="411.6" r="8" fill="url(#shd)"/><circle cx="612.8" cy="409.6" r="6" fill="#f8f8f8" stroke="#333" stroke-width="1"/>
<circle cx="470.6" cy="430.1" r="8" fill="url(#shd)"/><circle cx="469.1" cy="428.1" r="6" fill="#f8f8f8" stroke="#333" stroke-width="1"/>
<circle cx="484.2" cy="432.3" r="8" fill="url(#shd)"/><circle cx="482.7" cy="430.3" r="6" fill="#f8f8f8" stroke="#333" stroke-width="1"/>
<circle cx="432.7" cy="460.3" r="8" fill="url(#shd)"/><circle cx="431.2" cy="458.3" r="6" fill="#f8f8f8" stroke="#333" stroke-width="1"/>
<circle cx="667.6" cy="341.2" r="8" fill="url(#shd)"/><circle cx="666.1" cy="339.2" r="6" fill="#f8f8f8" stroke="#333" stroke-width="1"/>
<circle cx="592.1" cy="259.7" r="8" fill="url(#shd)"/><circle cx="590.6" cy="257.7" r="6" fill="#f8f8f8" stroke="#333" stroke-width="1"/>
<circle cx="673.5" cy="297.5" r="8" fill="url(#shd)"/><circle cx="672.0" cy="295.5" r="6" fill="#f8f8f8" stroke="#333" stroke-width="1"/>
<circle cx="732.1" cy="264.2" r="8" fill="url(#shd)"/><circle cx="730.6" cy="262.2" r="6" fill="#f8f8f8" stroke="#333" stroke-width="1"/>
<circle cx="856.4" cy="277.3" r="8" fill="url(#shd)"/><circle cx="854.9" cy="275.3" r="6" fill="#f8f8f8" stroke="#333" stroke-width="1"/>
<circle cx="905.4" cy="294.9" r="8" fill="url(#shd)"/><circle cx="903.9" cy="292.9" r="6" fill="#f8f8f8" stroke="#333" stroke-width="1"/>
<circle cx="755.4" cy="337.5" r="8" fill="url(#shd)"/><circle cx="753.9" cy="335.5" r="6" fill="#f8f8f8" stroke="#333" stroke-width="1"/>
<circle cx="797.1" cy="335.7" r="8" fill="url(#shd)"/><circle cx="795.6" cy="333.7" r="6" fill="#f8f8f8" stroke="#333" stroke-width="1"/>
<circle cx="901.7" cy="361.6" r="8" fill="url(#shd)"/><circle cx="900.2" cy="359.6" r="6" fill="#f8f8f8" stroke="#333" stroke-width="1"/>
<circle cx="766.5" cy="395.9" r="8" fill="url(#shd)"/><circle cx="765.0" cy="393.9" r="6" fill="#f8f8f8" stroke="#333" stroke-width="1"/>
<circle cx="970.2" cy="313.8" r="8" fill="url(#shd)"/><circle cx="968.7" cy="311.8" r="6" fill="#f8f8f8" stroke="#333" stroke-width="1"/>
<circle cx="1028.0" cy="356.0" r="8" fill="url(#shd)"/><circle cx="1026.5" cy="354.0" r="6" fill="#f8f8f8" stroke="#333" stroke-width="1"/>
<circle cx="641.5" cy="352.3" r="11" fill="url(#shd)"/><circle cx="639.5" cy="350.3" r="8.5" fill="#111"/><circle cx="633.5" cy="348.3" r="5" fill="#a8a8c8" stroke="#222" stroke-width="0.8"/><circle cx="637.5" cy="347.3" r="5.5" fill="#c0c0e0" stroke="#222" stroke-width="0.8"/>
</svg>
<div style="left:0px;top:1043px;width:1920px;height:17px;background:#f0f0f0;"></div>
<div style="left:0px;top:1043px;width:54px;height:18px;background:#f0f0f0;border:1px solid #000;border-top:none;"></div>
<div style="left:17px;top:1043px;width:1px;height:17px;background:#000;"></div>
<div style="left:35px;top:1043px;width:1px;height:17px;background:#000;"></div>
<svg style="position:absolute;left:0px;top:1043px" width="54" height="17"><path d="M5 4L12 11M12 4L5 11" stroke="#000" stroke-width="1.3"/><path d="M29 4.5L25 8L29 11.5Z" fill="#000"/><path d="M42 4.5L46 8L42 11.5Z" fill="#000"/></svg>
<svg style="position:absolute;left:54px;top:1042px" width="280" height="18" viewBox="0 0 280 18"><path d="M69.5 0.5L64.5 17.5H132.5L137.5 0.5" fill="#f0f0f0" stroke="#444"/><path d="M132.5 0.5L138.5 17.5H183.5L188.5 0.5" fill="#f0f0f0" stroke="#444"/><path d="M185.5 0.5L190.5 17.5H257.5L265.5 0.5" fill="#f0f0f0" stroke="#444"/><path d="M0.5 0.5L7.5 17.5H67.5L72.5 0.5" fill="#fff" stroke="#000"/><path d="M0 0.5H280" stroke="#000"/><path d="M1 0.5H72" stroke="#fff"/></svg>
<div class="t" style="left:66.00px;top:1046.69px;font-size:11px;font-weight:bold;letter-spacing:-0.094px;">Measures</div>
<div class="t" style="left:134.00px;top:1047.11px;font-size:10.5px;color:#222;letter-spacing:-0.707px;">Luminance</div>
<div class="t" style="left:200.00px;top:1047.11px;font-size:10.5px;color:#222;letter-spacing:-0.868px;">Gamma</div>
<div class="t" style="left:255.00px;top:1047.11px;font-size:10.5px;color:#222;letter-spacing:-0.602px;">RGB Levels</div>
<svg style="position:absolute;left:1750px;top:1044px" width="16" height="14" viewBox="0 0 16 14"><path d="M1 1H14V9L11 13H5L1 9Z" fill="#8a7a20" stroke="#333" stroke-width="0.8"/><rect x="4" y="3" width="6" height="4" fill="#f03030"/><circle cx="11" cy="10" r="2.5" fill="#ff0"/></svg>
<div style="left:1846px;top:1044px;width:14px;height:14px;background:#fff;border:1px solid #333;border-radius:2px;"></div>
<div class="t" style="left:1864.00px;top:1045.84px;font-size:12px;letter-spacing:-0.652px;">Reference</div>
<div style="left:0px;top:1060px;width:1920px;height:20px;background:#e6edf6;"></div>
<div class="t" style="left:3.00px;top:1065.00px;font-size:13px;letter-spacing:-0.715px;">Ready</div>
<div style="left:1742px;top:1062px;width:74px;height:18px;border-left:1px solid #b0bccc;border-top:1px solid #b0bccc;"></div>
<div style="left:1820px;top:1062px;width:28px;height:18px;border-left:1px solid #b0bccc;border-top:1px solid #b0bccc;"></div>
<div style="left:1851px;top:1062px;width:35px;height:18px;border-left:1px solid #b0bccc;border-top:1px solid #b0bccc;"></div>
<div style="left:1888px;top:1062px;width:32px;height:18px;border-left:1px solid #b0bccc;border-top:1px solid #b0bccc;"></div>
<div class="t" style="left:1853.00px;top:1065.84px;font-size:12px;letter-spacing:-1.109px;">NUM</div>
<script>
(function(){
var cv=document.getElementById('cie'); if(!cv||!cv.getContext) return;
var W=cv.width,H=cv.height,ctx=cv.getContext('2d');
var OX=402,OY=443;
function col(px,py,k,g){
  var u=(px+OX-526.85)/1652.5, v=(976.8-(py+OY))/562;
  if(v<0.002) v=0.002;
  var X=u/v, Y=1, Z=(1-u-v)/v;
  var r=3.2406*X-1.5372*Y-0.4986*Z, gg=-0.9689*X+1.8758*Y+0.0415*Z, b=0.0557*X-0.2040*Y+1.0570*Z;
  var m=Math.min(r,gg,b); if(m<0){r-=m;gg-=m;b-=m;}
  var M=Math.max(r,gg,b); r/=M; gg/=M; b/=M;
  r=Math.pow(r,g); gg=Math.pow(gg,g); b=Math.pow(b,g);
  return [r*k*255,gg*k*255,b*k*255];
}
function layer(k,g){
  var c=document.createElement('canvas'); c.width=W; c.height=H;
  var cx=c.getContext('2d'); var im=cx.createImageData(W,H); var d=im.data;
  for(var y=0;y<H;y++){ for(var x=0;x<W;x++){ var c3=col(x+0.5,y+0.5,k,g); var i=(y*W+x)*4; d[i]=c3[0]; d[i+1]=c3[1]; d[i+2]=c3[2]; d[i+3]=255; } }
  cx.putImageData(im,0,0); return c;
}
var outer=layer(0.78,0.4545);
ctx.fillStyle='#03080c'; ctx.fillRect(0,0,W,H);
ctx.save(); ctx.clip(new Path2D('M1319.2 378.2L1280.5 365.0C1246.8 353.5 1171.8 328.3 1116.8 309.5C1061.8 290.7 990.3 265.5 950.5 252.0C910.7 238.5 893.4 233.6 878.0 228.4C862.6 223.2 873.6 226.1 858.0 220.8C842.4 215.4 801.8 202.3 784.3 196.4C766.8 190.5 781.2 194.7 753.0 185.4C724.8 176.1 653.2 152.8 615.0 140.6C576.8 128.5 555.9 122.0 523.8 112.5C491.7 103.0 443.3 89.5 422.3 83.9C401.3 78.3 405.4 80.2 398.0 78.7C390.6 77.2 389.4 77.0 378.0 74.8C366.6 72.6 344.4 67.8 329.5 65.7C314.6 63.6 301.1 62.8 288.7 62.0C276.4 61.2 265.6 60.6 255.4 61.1C245.2 61.6 236.5 63.3 227.6 64.8C218.7 66.3 209.1 68.4 201.7 70.3C194.3 72.1 189.1 73.6 183.2 75.9C177.3 78.2 172.7 79.9 166.5 84.2C160.3 88.5 151.0 95.5 146.1 101.8C141.2 108.1 139.2 115.7 136.9 122.2C134.6 128.7 133.4 133.3 132.3 140.7C131.2 148.1 130.7 157.3 130.4 166.6C130.1 175.9 130.1 188.3 130.4 196.3C130.7 204.3 131.5 208.0 132.3 214.8C133.1 221.6 133.9 230.8 135.0 237.0C136.1 243.2 136.5 245.0 138.7 252.2C140.9 259.4 144.3 270.5 148.0 280.0C151.7 289.5 157.0 301.2 161.0 309.2C165.0 317.2 168.0 321.5 172.0 328.0C176.0 334.5 180.8 342.3 185.0 348.5C189.2 354.7 191.8 358.0 197.0 365.1C202.2 372.2 212.3 385.7 216.5 391.0C220.7 396.3 217.9 392.0 222.4 397.0C226.9 402.0 237.8 414.4 243.2 420.7C248.6 427.0 247.4 427.4 255.0 434.8C262.6 442.2 281.1 458.0 289.0 465.0C296.9 472.0 295.7 471.4 302.4 477.0C309.1 482.6 320.9 492.7 329.0 498.5C337.1 504.3 345.1 508.3 351.3 511.8C357.5 515.2 360.4 517.1 366.1 519.2C371.8 521.3 379.2 523.8 385.4 524.4C391.6 525.0 387.8 525.2 403.2 523.0L478.0 511.0L950.5 435.8L1319.2 378.2Z')); ctx.drawImage(outer,0,0); ctx.restore();
var inner=layer(1.0,0.36);
var tp='581.0,201.4 1162.0,347.4 384.7,498.0'.split(' ').map(function(s){return s.split(',').map(Number);});
ctx.save(); ctx.beginPath(); ctx.moveTo(tp[0][0],tp[0][1]); ctx.lineTo(tp[1][0],tp[1][1]); ctx.lineTo(tp[2][0],tp[2][1]); ctx.closePath(); ctx.clip(); ctx.drawImage(inner,0,0); ctx.restore();
})();
</script></body></html>
